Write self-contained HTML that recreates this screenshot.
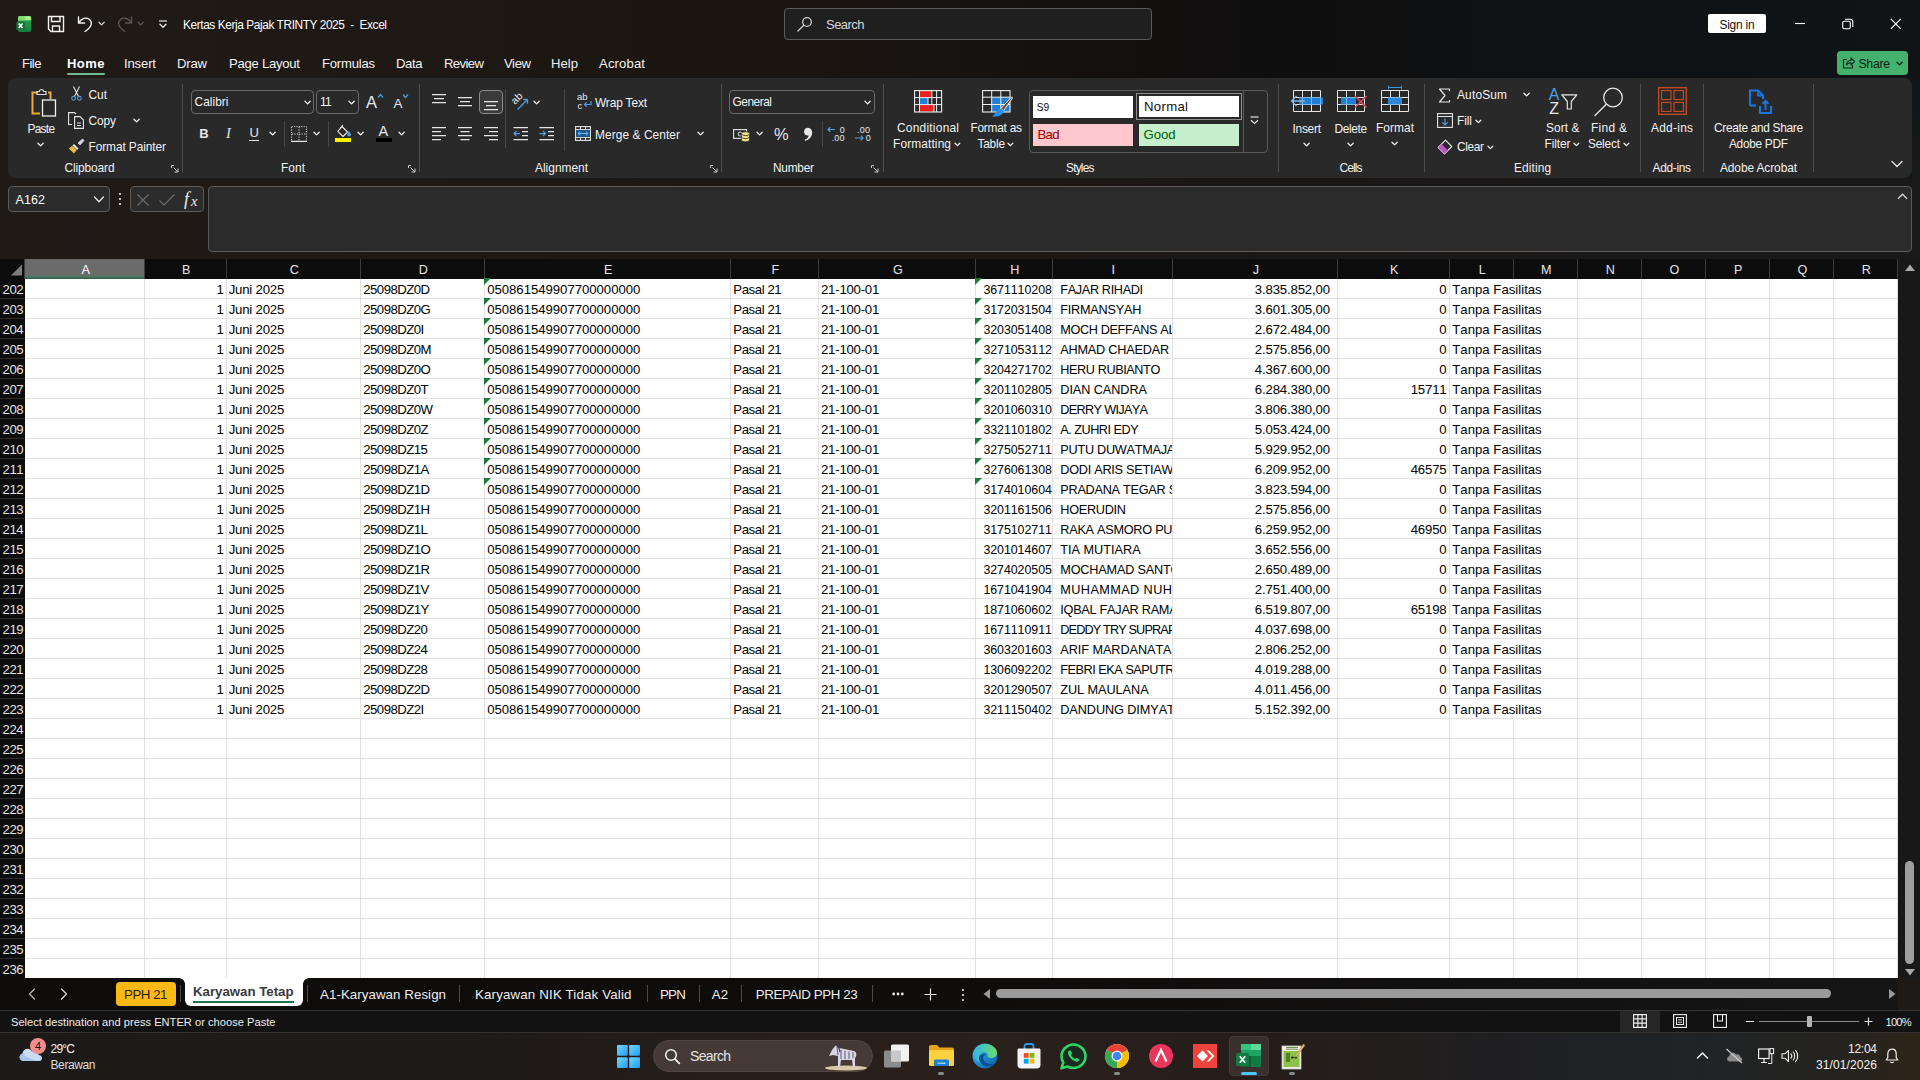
<!DOCTYPE html>
<html lang="id"><head><meta charset="utf-8"><title>Kertas Kerja Pajak TRINTY 2025 - Excel</title>
<style>
html,body{margin:0;padding:0;}
body{width:1920px;height:1080px;overflow:hidden;position:relative;background:#0d0d0d;font-family:"Liberation Sans",sans-serif;}
.a{position:absolute;}
.t{position:absolute;white-space:pre;line-height:1;}
svg{position:absolute;overflow:visible;}
.row{position:absolute;left:0;width:1897px;height:20px;}
.c{position:absolute;top:0;height:19px;overflow:hidden;white-space:pre;font-kerning:none;font-size:13.2px;line-height:22.6px;color:#000;}
.rh{font-kerning:none;position:absolute;left:0;width:23.2px;height:19px;top:0;color:#e2e2e2;font-size:13.2px;line-height:22.6px;text-align:right;white-space:pre;letter-spacing:-0.45px;}
.tri{position:absolute;top:0;width:0;height:0;border-top:7px solid #1e7a3c;border-right:7px solid transparent;}
.vsep{position:absolute;width:1px;background:#4a4a4a;}
.box{position:absolute;border:1px solid #666;border-radius:4px;box-sizing:border-box;}
</style></head><body>

<div class="a" style="left:0;top:0;width:1920px;height:259px;background:linear-gradient(90deg,#201b17 0%,#1d1713 30%,#1b1511 42%,#14110f 55%,#100f0f 66%,#0f1113 80%,#101417 100%);"></div>
<div class="a" id="ribbon" style="left:8px;top:78px;width:1904px;height:100px;border-radius:8px;background:#292929;"></div>
<div class="a" style="left:25px;top:279px;width:1873px;height:699px;background:#fff;"></div>
<div class="a" style="left:0;top:259px;width:1898px;height:20px;background:#0c0c0c;"></div>
<div class="a" style="left:0;top:279px;width:25px;height:699px;background:#0c0c0c;"></div>
<div class="a" style="left:25px;top:259px;width:119px;height:18px;background:#6b6b6b;"></div>
<div class="a" style="left:25px;top:275px;width:119px;height:4px;background:linear-gradient(180deg,#65706b 0%,#4f7563 40%,#2f6148 100%);"></div>
<svg style="left:0;top:259px" width="25" height="20"><path d="M11 16.5 L22 16.5 L22 5.5 Z" fill="#7d7d7d"/></svg>
<div class="a" style="left:144px;top:259px;width:1px;height:20px;background:#3c3c3c;"></div>
<span class="t" style="left:81.60px;top:264.00px;font-size:12.6px;color:#ffffff;">A</span>
<div class="a" style="left:226px;top:259px;width:1px;height:20px;background:#3c3c3c;"></div>
<span class="t" style="left:182.10px;top:264.00px;font-size:12.6px;color:#e6e6e6;">B</span>
<div class="a" style="left:360px;top:259px;width:1px;height:20px;background:#3c3c3c;"></div>
<span class="t" style="left:289.75px;top:264.00px;font-size:12.6px;color:#e6e6e6;">C</span>
<div class="a" style="left:484px;top:259px;width:1px;height:20px;background:#3c3c3c;"></div>
<span class="t" style="left:418.75px;top:264.00px;font-size:12.6px;color:#e6e6e6;">D</span>
<div class="a" style="left:730px;top:259px;width:1px;height:20px;background:#3c3c3c;"></div>
<span class="t" style="left:604.10px;top:264.00px;font-size:12.6px;color:#e6e6e6;">E</span>
<div class="a" style="left:818px;top:259px;width:1px;height:20px;background:#3c3c3c;"></div>
<span class="t" style="left:771.45px;top:264.00px;font-size:12.6px;color:#e6e6e6;">F</span>
<div class="a" style="left:975px;top:259px;width:1px;height:20px;background:#3c3c3c;"></div>
<span class="t" style="left:892.90px;top:264.00px;font-size:12.6px;color:#e6e6e6;">G</span>
<div class="a" style="left:1052px;top:259px;width:1px;height:20px;background:#3c3c3c;"></div>
<span class="t" style="left:1010.25px;top:264.00px;font-size:12.6px;color:#e6e6e6;">H</span>
<div class="a" style="left:1172px;top:259px;width:1px;height:20px;background:#3c3c3c;"></div>
<span class="t" style="left:1111.55px;top:264.00px;font-size:12.6px;color:#e6e6e6;">I</span>
<div class="a" style="left:1337px;top:259px;width:1px;height:20px;background:#3c3c3c;"></div>
<span class="t" style="left:1252.65px;top:264.00px;font-size:12.6px;color:#e6e6e6;">J</span>
<div class="a" style="left:1449px;top:259px;width:1px;height:20px;background:#3c3c3c;"></div>
<span class="t" style="left:1390.10px;top:264.00px;font-size:12.6px;color:#e6e6e6;">K</span>
<div class="a" style="left:1513px;top:259px;width:1px;height:20px;background:#3c3c3c;"></div>
<span class="t" style="left:1478.79px;top:264.00px;font-size:12.6px;color:#e6e6e6;">L</span>
<div class="a" style="left:1577px;top:259px;width:1px;height:20px;background:#3c3c3c;"></div>
<span class="t" style="left:1541.05px;top:264.00px;font-size:12.6px;color:#e6e6e6;">M</span>
<div class="a" style="left:1641px;top:259px;width:1px;height:20px;background:#3c3c3c;"></div>
<span class="t" style="left:1605.75px;top:264.00px;font-size:12.6px;color:#e6e6e6;">N</span>
<div class="a" style="left:1705px;top:259px;width:1px;height:20px;background:#3c3c3c;"></div>
<span class="t" style="left:1669.40px;top:264.00px;font-size:12.6px;color:#e6e6e6;">O</span>
<div class="a" style="left:1769px;top:259px;width:1px;height:20px;background:#3c3c3c;"></div>
<span class="t" style="left:1734.10px;top:264.00px;font-size:12.6px;color:#e6e6e6;">P</span>
<div class="a" style="left:1833px;top:259px;width:1px;height:20px;background:#3c3c3c;"></div>
<span class="t" style="left:1797.40px;top:264.00px;font-size:12.6px;color:#e6e6e6;">Q</span>
<div class="a" style="left:1897px;top:259px;width:1px;height:20px;background:#3c3c3c;"></div>
<span class="t" style="left:1861.75px;top:264.00px;font-size:12.6px;color:#e6e6e6;">R</span>
<div class="a" style="left:24px;top:259px;width:1px;height:20px;background:#3c3c3c;"></div>
<div class="a" style="left:144px;top:279px;width:1px;height:699px;background:#e2e2e2;"></div>
<div class="a" style="left:226px;top:279px;width:1px;height:699px;background:#e2e2e2;"></div>
<div class="a" style="left:360px;top:279px;width:1px;height:699px;background:#e2e2e2;"></div>
<div class="a" style="left:484px;top:279px;width:1px;height:699px;background:#e2e2e2;"></div>
<div class="a" style="left:730px;top:279px;width:1px;height:699px;background:#e2e2e2;"></div>
<div class="a" style="left:818px;top:279px;width:1px;height:699px;background:#e2e2e2;"></div>
<div class="a" style="left:975px;top:279px;width:1px;height:699px;background:#e2e2e2;"></div>
<div class="a" style="left:1052px;top:279px;width:1px;height:699px;background:#e2e2e2;"></div>
<div class="a" style="left:1172px;top:279px;width:1px;height:699px;background:#e2e2e2;"></div>
<div class="a" style="left:1337px;top:279px;width:1px;height:699px;background:#e2e2e2;"></div>
<div class="a" style="left:1449px;top:279px;width:1px;height:699px;background:#e2e2e2;"></div>
<div class="a" style="left:1513px;top:279px;width:1px;height:699px;background:#e2e2e2;"></div>
<div class="a" style="left:1577px;top:279px;width:1px;height:699px;background:#e2e2e2;"></div>
<div class="a" style="left:1641px;top:279px;width:1px;height:699px;background:#e2e2e2;"></div>
<div class="a" style="left:1705px;top:279px;width:1px;height:699px;background:#e2e2e2;"></div>
<div class="a" style="left:1769px;top:279px;width:1px;height:699px;background:#e2e2e2;"></div>
<div class="a" style="left:1833px;top:279px;width:1px;height:699px;background:#e2e2e2;"></div>
<div class="a" style="left:1897px;top:279px;width:1px;height:699px;background:#e2e2e2;"></div>
<div class="a" style="left:25px;top:298px;width:1872px;height:1px;background:#e2e2e2;"></div>
<div class="a" style="left:0;top:298px;width:25px;height:1px;background:#2e2e2e;"></div>
<div class="a" style="left:25px;top:318px;width:1872px;height:1px;background:#e2e2e2;"></div>
<div class="a" style="left:0;top:318px;width:25px;height:1px;background:#2e2e2e;"></div>
<div class="a" style="left:25px;top:338px;width:1872px;height:1px;background:#e2e2e2;"></div>
<div class="a" style="left:0;top:338px;width:25px;height:1px;background:#2e2e2e;"></div>
<div class="a" style="left:25px;top:358px;width:1872px;height:1px;background:#e2e2e2;"></div>
<div class="a" style="left:0;top:358px;width:25px;height:1px;background:#2e2e2e;"></div>
<div class="a" style="left:25px;top:378px;width:1872px;height:1px;background:#e2e2e2;"></div>
<div class="a" style="left:0;top:378px;width:25px;height:1px;background:#2e2e2e;"></div>
<div class="a" style="left:25px;top:398px;width:1872px;height:1px;background:#e2e2e2;"></div>
<div class="a" style="left:0;top:398px;width:25px;height:1px;background:#2e2e2e;"></div>
<div class="a" style="left:25px;top:418px;width:1872px;height:1px;background:#e2e2e2;"></div>
<div class="a" style="left:0;top:418px;width:25px;height:1px;background:#2e2e2e;"></div>
<div class="a" style="left:25px;top:438px;width:1872px;height:1px;background:#e2e2e2;"></div>
<div class="a" style="left:0;top:438px;width:25px;height:1px;background:#2e2e2e;"></div>
<div class="a" style="left:25px;top:458px;width:1872px;height:1px;background:#e2e2e2;"></div>
<div class="a" style="left:0;top:458px;width:25px;height:1px;background:#2e2e2e;"></div>
<div class="a" style="left:25px;top:478px;width:1872px;height:1px;background:#e2e2e2;"></div>
<div class="a" style="left:0;top:478px;width:25px;height:1px;background:#2e2e2e;"></div>
<div class="a" style="left:25px;top:498px;width:1872px;height:1px;background:#e2e2e2;"></div>
<div class="a" style="left:0;top:498px;width:25px;height:1px;background:#2e2e2e;"></div>
<div class="a" style="left:25px;top:518px;width:1872px;height:1px;background:#e2e2e2;"></div>
<div class="a" style="left:0;top:518px;width:25px;height:1px;background:#2e2e2e;"></div>
<div class="a" style="left:25px;top:538px;width:1872px;height:1px;background:#e2e2e2;"></div>
<div class="a" style="left:0;top:538px;width:25px;height:1px;background:#2e2e2e;"></div>
<div class="a" style="left:25px;top:558px;width:1872px;height:1px;background:#e2e2e2;"></div>
<div class="a" style="left:0;top:558px;width:25px;height:1px;background:#2e2e2e;"></div>
<div class="a" style="left:25px;top:578px;width:1872px;height:1px;background:#e2e2e2;"></div>
<div class="a" style="left:0;top:578px;width:25px;height:1px;background:#2e2e2e;"></div>
<div class="a" style="left:25px;top:598px;width:1872px;height:1px;background:#e2e2e2;"></div>
<div class="a" style="left:0;top:598px;width:25px;height:1px;background:#2e2e2e;"></div>
<div class="a" style="left:25px;top:618px;width:1872px;height:1px;background:#e2e2e2;"></div>
<div class="a" style="left:0;top:618px;width:25px;height:1px;background:#2e2e2e;"></div>
<div class="a" style="left:25px;top:638px;width:1872px;height:1px;background:#e2e2e2;"></div>
<div class="a" style="left:0;top:638px;width:25px;height:1px;background:#2e2e2e;"></div>
<div class="a" style="left:25px;top:658px;width:1872px;height:1px;background:#e2e2e2;"></div>
<div class="a" style="left:0;top:658px;width:25px;height:1px;background:#2e2e2e;"></div>
<div class="a" style="left:25px;top:678px;width:1872px;height:1px;background:#e2e2e2;"></div>
<div class="a" style="left:0;top:678px;width:25px;height:1px;background:#2e2e2e;"></div>
<div class="a" style="left:25px;top:698px;width:1872px;height:1px;background:#e2e2e2;"></div>
<div class="a" style="left:0;top:698px;width:25px;height:1px;background:#2e2e2e;"></div>
<div class="a" style="left:25px;top:718px;width:1872px;height:1px;background:#e2e2e2;"></div>
<div class="a" style="left:0;top:718px;width:25px;height:1px;background:#2e2e2e;"></div>
<div class="a" style="left:25px;top:738px;width:1872px;height:1px;background:#e2e2e2;"></div>
<div class="a" style="left:0;top:738px;width:25px;height:1px;background:#2e2e2e;"></div>
<div class="a" style="left:25px;top:758px;width:1872px;height:1px;background:#e2e2e2;"></div>
<div class="a" style="left:0;top:758px;width:25px;height:1px;background:#2e2e2e;"></div>
<div class="a" style="left:25px;top:778px;width:1872px;height:1px;background:#e2e2e2;"></div>
<div class="a" style="left:0;top:778px;width:25px;height:1px;background:#2e2e2e;"></div>
<div class="a" style="left:25px;top:798px;width:1872px;height:1px;background:#e2e2e2;"></div>
<div class="a" style="left:0;top:798px;width:25px;height:1px;background:#2e2e2e;"></div>
<div class="a" style="left:25px;top:818px;width:1872px;height:1px;background:#e2e2e2;"></div>
<div class="a" style="left:0;top:818px;width:25px;height:1px;background:#2e2e2e;"></div>
<div class="a" style="left:25px;top:838px;width:1872px;height:1px;background:#e2e2e2;"></div>
<div class="a" style="left:0;top:838px;width:25px;height:1px;background:#2e2e2e;"></div>
<div class="a" style="left:25px;top:858px;width:1872px;height:1px;background:#e2e2e2;"></div>
<div class="a" style="left:0;top:858px;width:25px;height:1px;background:#2e2e2e;"></div>
<div class="a" style="left:25px;top:878px;width:1872px;height:1px;background:#e2e2e2;"></div>
<div class="a" style="left:0;top:878px;width:25px;height:1px;background:#2e2e2e;"></div>
<div class="a" style="left:25px;top:898px;width:1872px;height:1px;background:#e2e2e2;"></div>
<div class="a" style="left:0;top:898px;width:25px;height:1px;background:#2e2e2e;"></div>
<div class="a" style="left:25px;top:918px;width:1872px;height:1px;background:#e2e2e2;"></div>
<div class="a" style="left:0;top:918px;width:25px;height:1px;background:#2e2e2e;"></div>
<div class="a" style="left:25px;top:938px;width:1872px;height:1px;background:#e2e2e2;"></div>
<div class="a" style="left:0;top:938px;width:25px;height:1px;background:#2e2e2e;"></div>
<div class="a" style="left:25px;top:958px;width:1872px;height:1px;background:#e2e2e2;"></div>
<div class="a" style="left:0;top:958px;width:25px;height:1px;background:#2e2e2e;"></div>
<div class="row" style="top:279px;height:20px;overflow:hidden;"><span class="rh">202</span><span class="c" style="left:144px;width:79.80px;text-align:right;">1</span><span class="c" style="left:228.7px;width:131.3px;letter-spacing:-0.200px;">Juni 2025</span><span class="c" style="left:363.3px;width:120.7px;letter-spacing:-0.551px;">25098DZ0D</span><span class="c" style="left:487.2px;width:242.8px;letter-spacing:-0.042px;">050861549907700000000</span><span class="c" style="left:733.3px;width:84.7px;letter-spacing:-0.418px;">Pasal 21</span><span class="c" style="left:821px;width:154px;letter-spacing:-0.228px;">21-100-01</span><span class="c" style="left:983.4px;width:68.6px;letter-spacing:-0.047px;font-size:12.4px;">3671110208</span><span class="c" style="left:1060.3px;width:111.7px;letter-spacing:-0.356px;font-size:12.7px;">FAJAR RIHADI</span><span class="c" style="left:1172px;width:157.83px;text-align:right;letter-spacing:-0.165px;">3.835.852,00</span><span class="c" style="left:1337px;width:109.53px;text-align:right;letter-spacing:-0.165px;">0</span><span class="c" style="left:1452.3px;width:123.7px;background:#fff;">Tanpa Fasilitas</span></div>
<i class="tri" style="left:484px;top:278px"></i><i class="tri" style="left:975px;top:278px"></i>
<div class="row" style="top:299px;height:20px;overflow:hidden;"><span class="rh">203</span><span class="c" style="left:144px;width:79.80px;text-align:right;">1</span><span class="c" style="left:228.7px;width:131.3px;letter-spacing:-0.200px;">Juni 2025</span><span class="c" style="left:363.3px;width:120.7px;letter-spacing:-0.551px;">25098DZ0G</span><span class="c" style="left:487.2px;width:242.8px;letter-spacing:-0.042px;">050861549907700000000</span><span class="c" style="left:733.3px;width:84.7px;letter-spacing:-0.418px;">Pasal 21</span><span class="c" style="left:821px;width:154px;letter-spacing:-0.228px;">21-100-01</span><span class="c" style="left:983.4px;width:68.6px;letter-spacing:-0.047px;font-size:12.4px;">3172031504</span><span class="c" style="left:1060.3px;width:111.7px;letter-spacing:-0.243px;font-size:12.7px;">FIRMANSYAH</span><span class="c" style="left:1172px;width:157.83px;text-align:right;letter-spacing:-0.165px;">3.601.305,00</span><span class="c" style="left:1337px;width:109.53px;text-align:right;letter-spacing:-0.165px;">0</span><span class="c" style="left:1452.3px;width:123.7px;background:#fff;">Tanpa Fasilitas</span></div>
<i class="tri" style="left:484px;top:298px"></i><i class="tri" style="left:975px;top:298px"></i>
<div class="row" style="top:319px;height:20px;overflow:hidden;"><span class="rh">204</span><span class="c" style="left:144px;width:79.80px;text-align:right;">1</span><span class="c" style="left:228.7px;width:131.3px;letter-spacing:-0.200px;">Juni 2025</span><span class="c" style="left:363.3px;width:120.7px;letter-spacing:-0.551px;">25098DZ0I</span><span class="c" style="left:487.2px;width:242.8px;letter-spacing:-0.042px;">050861549907700000000</span><span class="c" style="left:733.3px;width:84.7px;letter-spacing:-0.418px;">Pasal 21</span><span class="c" style="left:821px;width:154px;letter-spacing:-0.228px;">21-100-01</span><span class="c" style="left:983.4px;width:68.6px;letter-spacing:-0.047px;font-size:12.4px;">3203051408</span><span class="c" style="left:1060.3px;width:111.7px;letter-spacing:-0.385px;font-size:12.7px;">MOCH DEFFANS ALFARIZI</span><span class="c" style="left:1172px;width:157.83px;text-align:right;letter-spacing:-0.165px;">2.672.484,00</span><span class="c" style="left:1337px;width:109.53px;text-align:right;letter-spacing:-0.165px;">0</span><span class="c" style="left:1452.3px;width:123.7px;background:#fff;">Tanpa Fasilitas</span></div>
<i class="tri" style="left:484px;top:318px"></i><i class="tri" style="left:975px;top:318px"></i>
<div class="row" style="top:339px;height:20px;overflow:hidden;"><span class="rh">205</span><span class="c" style="left:144px;width:79.80px;text-align:right;">1</span><span class="c" style="left:228.7px;width:131.3px;letter-spacing:-0.200px;">Juni 2025</span><span class="c" style="left:363.3px;width:120.7px;letter-spacing:-0.551px;">25098DZ0M</span><span class="c" style="left:487.2px;width:242.8px;letter-spacing:-0.042px;">050861549907700000000</span><span class="c" style="left:733.3px;width:84.7px;letter-spacing:-0.418px;">Pasal 21</span><span class="c" style="left:821px;width:154px;letter-spacing:-0.228px;">21-100-01</span><span class="c" style="left:983.4px;width:68.6px;letter-spacing:-0.047px;font-size:12.4px;">3271053112</span><span class="c" style="left:1060.3px;width:111.7px;letter-spacing:-0.216px;font-size:12.7px;">AHMAD CHAEDAR</span><span class="c" style="left:1172px;width:157.83px;text-align:right;letter-spacing:-0.165px;">2.575.856,00</span><span class="c" style="left:1337px;width:109.53px;text-align:right;letter-spacing:-0.165px;">0</span><span class="c" style="left:1452.3px;width:123.7px;background:#fff;">Tanpa Fasilitas</span></div>
<i class="tri" style="left:484px;top:338px"></i><i class="tri" style="left:975px;top:338px"></i>
<div class="row" style="top:359px;height:20px;overflow:hidden;"><span class="rh">206</span><span class="c" style="left:144px;width:79.80px;text-align:right;">1</span><span class="c" style="left:228.7px;width:131.3px;letter-spacing:-0.200px;">Juni 2025</span><span class="c" style="left:363.3px;width:120.7px;letter-spacing:-0.551px;">25098DZ0O</span><span class="c" style="left:487.2px;width:242.8px;letter-spacing:-0.042px;">050861549907700000000</span><span class="c" style="left:733.3px;width:84.7px;letter-spacing:-0.418px;">Pasal 21</span><span class="c" style="left:821px;width:154px;letter-spacing:-0.228px;">21-100-01</span><span class="c" style="left:983.4px;width:68.6px;letter-spacing:-0.047px;font-size:12.4px;">3204271702</span><span class="c" style="left:1060.3px;width:111.7px;letter-spacing:-0.419px;font-size:12.7px;">HERU RUBIANTO</span><span class="c" style="left:1172px;width:157.83px;text-align:right;letter-spacing:-0.165px;">4.367.600,00</span><span class="c" style="left:1337px;width:109.53px;text-align:right;letter-spacing:-0.165px;">0</span><span class="c" style="left:1452.3px;width:123.7px;background:#fff;">Tanpa Fasilitas</span></div>
<i class="tri" style="left:484px;top:358px"></i><i class="tri" style="left:975px;top:358px"></i>
<div class="row" style="top:379px;height:20px;overflow:hidden;"><span class="rh">207</span><span class="c" style="left:144px;width:79.80px;text-align:right;">1</span><span class="c" style="left:228.7px;width:131.3px;letter-spacing:-0.200px;">Juni 2025</span><span class="c" style="left:363.3px;width:120.7px;letter-spacing:-0.551px;">25098DZ0T</span><span class="c" style="left:487.2px;width:242.8px;letter-spacing:-0.042px;">050861549907700000000</span><span class="c" style="left:733.3px;width:84.7px;letter-spacing:-0.418px;">Pasal 21</span><span class="c" style="left:821px;width:154px;letter-spacing:-0.228px;">21-100-01</span><span class="c" style="left:983.4px;width:68.6px;letter-spacing:-0.047px;font-size:12.4px;">3201102805</span><span class="c" style="left:1060.3px;width:111.7px;letter-spacing:-0.072px;font-size:12.7px;">DIAN CANDRA</span><span class="c" style="left:1172px;width:157.83px;text-align:right;letter-spacing:-0.165px;">6.284.380,00</span><span class="c" style="left:1337px;width:109.53px;text-align:right;letter-spacing:-0.165px;">15711</span><span class="c" style="left:1452.3px;width:123.7px;background:#fff;">Tanpa Fasilitas</span></div>
<i class="tri" style="left:484px;top:378px"></i><i class="tri" style="left:975px;top:378px"></i>
<div class="row" style="top:399px;height:20px;overflow:hidden;"><span class="rh">208</span><span class="c" style="left:144px;width:79.80px;text-align:right;">1</span><span class="c" style="left:228.7px;width:131.3px;letter-spacing:-0.200px;">Juni 2025</span><span class="c" style="left:363.3px;width:120.7px;letter-spacing:-0.551px;">25098DZ0W</span><span class="c" style="left:487.2px;width:242.8px;letter-spacing:-0.042px;">050861549907700000000</span><span class="c" style="left:733.3px;width:84.7px;letter-spacing:-0.418px;">Pasal 21</span><span class="c" style="left:821px;width:154px;letter-spacing:-0.228px;">21-100-01</span><span class="c" style="left:983.4px;width:68.6px;letter-spacing:-0.047px;font-size:12.4px;">3201060310</span><span class="c" style="left:1060.3px;width:111.7px;letter-spacing:-0.679px;font-size:12.7px;">DERRY WIJAYA</span><span class="c" style="left:1172px;width:157.83px;text-align:right;letter-spacing:-0.165px;">3.806.380,00</span><span class="c" style="left:1337px;width:109.53px;text-align:right;letter-spacing:-0.165px;">0</span><span class="c" style="left:1452.3px;width:123.7px;background:#fff;">Tanpa Fasilitas</span></div>
<i class="tri" style="left:484px;top:398px"></i><i class="tri" style="left:975px;top:398px"></i>
<div class="row" style="top:419px;height:20px;overflow:hidden;"><span class="rh">209</span><span class="c" style="left:144px;width:79.80px;text-align:right;">1</span><span class="c" style="left:228.7px;width:131.3px;letter-spacing:-0.200px;">Juni 2025</span><span class="c" style="left:363.3px;width:120.7px;letter-spacing:-0.551px;">25098DZ0Z</span><span class="c" style="left:487.2px;width:242.8px;letter-spacing:-0.042px;">050861549907700000000</span><span class="c" style="left:733.3px;width:84.7px;letter-spacing:-0.418px;">Pasal 21</span><span class="c" style="left:821px;width:154px;letter-spacing:-0.228px;">21-100-01</span><span class="c" style="left:983.4px;width:68.6px;letter-spacing:-0.047px;font-size:12.4px;">3321101802</span><span class="c" style="left:1060.3px;width:111.7px;letter-spacing:-0.508px;font-size:12.7px;">A. ZUHRI EDY</span><span class="c" style="left:1172px;width:157.83px;text-align:right;letter-spacing:-0.165px;">5.053.424,00</span><span class="c" style="left:1337px;width:109.53px;text-align:right;letter-spacing:-0.165px;">0</span><span class="c" style="left:1452.3px;width:123.7px;background:#fff;">Tanpa Fasilitas</span></div>
<i class="tri" style="left:484px;top:418px"></i><i class="tri" style="left:975px;top:418px"></i>
<div class="row" style="top:439px;height:20px;overflow:hidden;"><span class="rh">210</span><span class="c" style="left:144px;width:79.80px;text-align:right;">1</span><span class="c" style="left:228.7px;width:131.3px;letter-spacing:-0.200px;">Juni 2025</span><span class="c" style="left:363.3px;width:120.7px;letter-spacing:-0.551px;">25098DZ15</span><span class="c" style="left:487.2px;width:242.8px;letter-spacing:-0.042px;">050861549907700000000</span><span class="c" style="left:733.3px;width:84.7px;letter-spacing:-0.418px;">Pasal 21</span><span class="c" style="left:821px;width:154px;letter-spacing:-0.228px;">21-100-01</span><span class="c" style="left:983.4px;width:68.6px;letter-spacing:-0.047px;font-size:12.4px;">3275052711</span><span class="c" style="left:1060.3px;width:111.7px;letter-spacing:-0.263px;font-size:12.7px;">PUTU DUWATMAJA</span><span class="c" style="left:1172px;width:157.83px;text-align:right;letter-spacing:-0.165px;">5.929.952,00</span><span class="c" style="left:1337px;width:109.53px;text-align:right;letter-spacing:-0.165px;">0</span><span class="c" style="left:1452.3px;width:123.7px;background:#fff;">Tanpa Fasilitas</span></div>
<i class="tri" style="left:484px;top:438px"></i><i class="tri" style="left:975px;top:438px"></i>
<div class="row" style="top:459px;height:20px;overflow:hidden;"><span class="rh">211</span><span class="c" style="left:144px;width:79.80px;text-align:right;">1</span><span class="c" style="left:228.7px;width:131.3px;letter-spacing:-0.200px;">Juni 2025</span><span class="c" style="left:363.3px;width:120.7px;letter-spacing:-0.551px;">25098DZ1A</span><span class="c" style="left:487.2px;width:242.8px;letter-spacing:-0.042px;">050861549907700000000</span><span class="c" style="left:733.3px;width:84.7px;letter-spacing:-0.418px;">Pasal 21</span><span class="c" style="left:821px;width:154px;letter-spacing:-0.228px;">21-100-01</span><span class="c" style="left:983.4px;width:68.6px;letter-spacing:-0.047px;font-size:12.4px;">3276061308</span><span class="c" style="left:1060.3px;width:111.7px;letter-spacing:-0.263px;font-size:12.7px;">DODI ARIS SETIAWAN</span><span class="c" style="left:1172px;width:157.83px;text-align:right;letter-spacing:-0.165px;">6.209.952,00</span><span class="c" style="left:1337px;width:109.53px;text-align:right;letter-spacing:-0.165px;">46575</span><span class="c" style="left:1452.3px;width:123.7px;background:#fff;">Tanpa Fasilitas</span></div>
<i class="tri" style="left:484px;top:458px"></i><i class="tri" style="left:975px;top:458px"></i>
<div class="row" style="top:479px;height:20px;overflow:hidden;"><span class="rh">212</span><span class="c" style="left:144px;width:79.80px;text-align:right;">1</span><span class="c" style="left:228.7px;width:131.3px;letter-spacing:-0.200px;">Juni 2025</span><span class="c" style="left:363.3px;width:120.7px;letter-spacing:-0.551px;">25098DZ1D</span><span class="c" style="left:487.2px;width:242.8px;letter-spacing:-0.042px;">050861549907700000000</span><span class="c" style="left:733.3px;width:84.7px;letter-spacing:-0.418px;">Pasal 21</span><span class="c" style="left:821px;width:154px;letter-spacing:-0.228px;">21-100-01</span><span class="c" style="left:983.4px;width:68.6px;letter-spacing:-0.047px;font-size:12.4px;">3174010604</span><span class="c" style="left:1060.3px;width:111.7px;letter-spacing:-0.263px;font-size:12.7px;">PRADANA TEGAR SAPUTRA</span><span class="c" style="left:1172px;width:157.83px;text-align:right;letter-spacing:-0.165px;">3.823.594,00</span><span class="c" style="left:1337px;width:109.53px;text-align:right;letter-spacing:-0.165px;">0</span><span class="c" style="left:1452.3px;width:123.7px;background:#fff;">Tanpa Fasilitas</span></div>
<i class="tri" style="left:484px;top:478px"></i><i class="tri" style="left:975px;top:478px"></i>
<div class="row" style="top:499px;height:20px;overflow:hidden;"><span class="rh">213</span><span class="c" style="left:144px;width:79.80px;text-align:right;">1</span><span class="c" style="left:228.7px;width:131.3px;letter-spacing:-0.200px;">Juni 2025</span><span class="c" style="left:363.3px;width:120.7px;letter-spacing:-0.551px;">25098DZ1H</span><span class="c" style="left:487.2px;width:242.8px;letter-spacing:-0.042px;">050861549907700000000</span><span class="c" style="left:733.3px;width:84.7px;letter-spacing:-0.418px;">Pasal 21</span><span class="c" style="left:821px;width:154px;letter-spacing:-0.228px;">21-100-01</span><span class="c" style="left:983.4px;width:68.6px;letter-spacing:-0.047px;font-size:12.4px;">3201161506</span><span class="c" style="left:1060.3px;width:111.7px;letter-spacing:-0.282px;font-size:12.7px;">HOERUDIN</span><span class="c" style="left:1172px;width:157.83px;text-align:right;letter-spacing:-0.165px;">2.575.856,00</span><span class="c" style="left:1337px;width:109.53px;text-align:right;letter-spacing:-0.165px;">0</span><span class="c" style="left:1452.3px;width:123.7px;background:#fff;">Tanpa Fasilitas</span></div>
<div class="row" style="top:519px;height:20px;overflow:hidden;"><span class="rh">214</span><span class="c" style="left:144px;width:79.80px;text-align:right;">1</span><span class="c" style="left:228.7px;width:131.3px;letter-spacing:-0.200px;">Juni 2025</span><span class="c" style="left:363.3px;width:120.7px;letter-spacing:-0.551px;">25098DZ1L</span><span class="c" style="left:487.2px;width:242.8px;letter-spacing:-0.042px;">050861549907700000000</span><span class="c" style="left:733.3px;width:84.7px;letter-spacing:-0.418px;">Pasal 21</span><span class="c" style="left:821px;width:154px;letter-spacing:-0.228px;">21-100-01</span><span class="c" style="left:983.4px;width:68.6px;letter-spacing:-0.047px;font-size:12.4px;">3175102711</span><span class="c" style="left:1060.3px;width:111.7px;letter-spacing:-0.263px;font-size:12.7px;">RAKA ASMORO PUTRA</span><span class="c" style="left:1172px;width:157.83px;text-align:right;letter-spacing:-0.165px;">6.259.952,00</span><span class="c" style="left:1337px;width:109.53px;text-align:right;letter-spacing:-0.165px;">46950</span><span class="c" style="left:1452.3px;width:123.7px;background:#fff;">Tanpa Fasilitas</span></div>
<div class="row" style="top:539px;height:20px;overflow:hidden;"><span class="rh">215</span><span class="c" style="left:144px;width:79.80px;text-align:right;">1</span><span class="c" style="left:228.7px;width:131.3px;letter-spacing:-0.200px;">Juni 2025</span><span class="c" style="left:363.3px;width:120.7px;letter-spacing:-0.551px;">25098DZ1O</span><span class="c" style="left:487.2px;width:242.8px;letter-spacing:-0.042px;">050861549907700000000</span><span class="c" style="left:733.3px;width:84.7px;letter-spacing:-0.418px;">Pasal 21</span><span class="c" style="left:821px;width:154px;letter-spacing:-0.228px;">21-100-01</span><span class="c" style="left:983.4px;width:68.6px;letter-spacing:-0.047px;font-size:12.4px;">3201014607</span><span class="c" style="left:1060.3px;width:111.7px;letter-spacing:-0.006px;font-size:12.7px;">TIA MUTIARA</span><span class="c" style="left:1172px;width:157.83px;text-align:right;letter-spacing:-0.165px;">3.652.556,00</span><span class="c" style="left:1337px;width:109.53px;text-align:right;letter-spacing:-0.165px;">0</span><span class="c" style="left:1452.3px;width:123.7px;background:#fff;">Tanpa Fasilitas</span></div>
<div class="row" style="top:559px;height:20px;overflow:hidden;"><span class="rh">216</span><span class="c" style="left:144px;width:79.80px;text-align:right;">1</span><span class="c" style="left:228.7px;width:131.3px;letter-spacing:-0.200px;">Juni 2025</span><span class="c" style="left:363.3px;width:120.7px;letter-spacing:-0.551px;">25098DZ1R</span><span class="c" style="left:487.2px;width:242.8px;letter-spacing:-0.042px;">050861549907700000000</span><span class="c" style="left:733.3px;width:84.7px;letter-spacing:-0.418px;">Pasal 21</span><span class="c" style="left:821px;width:154px;letter-spacing:-0.228px;">21-100-01</span><span class="c" style="left:983.4px;width:68.6px;letter-spacing:-0.047px;font-size:12.4px;">3274020505</span><span class="c" style="left:1060.3px;width:111.7px;letter-spacing:-0.190px;font-size:12.7px;">MOCHAMAD SANTOSO</span><span class="c" style="left:1172px;width:157.83px;text-align:right;letter-spacing:-0.165px;">2.650.489,00</span><span class="c" style="left:1337px;width:109.53px;text-align:right;letter-spacing:-0.165px;">0</span><span class="c" style="left:1452.3px;width:123.7px;background:#fff;">Tanpa Fasilitas</span></div>
<div class="row" style="top:579px;height:20px;overflow:hidden;"><span class="rh">217</span><span class="c" style="left:144px;width:79.80px;text-align:right;">1</span><span class="c" style="left:228.7px;width:131.3px;letter-spacing:-0.200px;">Juni 2025</span><span class="c" style="left:363.3px;width:120.7px;letter-spacing:-0.551px;">25098DZ1V</span><span class="c" style="left:487.2px;width:242.8px;letter-spacing:-0.042px;">050861549907700000000</span><span class="c" style="left:733.3px;width:84.7px;letter-spacing:-0.418px;">Pasal 21</span><span class="c" style="left:821px;width:154px;letter-spacing:-0.228px;">21-100-01</span><span class="c" style="left:983.4px;width:68.6px;letter-spacing:-0.047px;font-size:12.4px;">1671041904</span><span class="c" style="left:1060.3px;width:111.7px;letter-spacing:0.405px;font-size:12.7px;">MUHAMMAD NUH</span><span class="c" style="left:1172px;width:157.83px;text-align:right;letter-spacing:-0.165px;">2.751.400,00</span><span class="c" style="left:1337px;width:109.53px;text-align:right;letter-spacing:-0.165px;">0</span><span class="c" style="left:1452.3px;width:123.7px;background:#fff;">Tanpa Fasilitas</span></div>
<div class="row" style="top:599px;height:20px;overflow:hidden;"><span class="rh">218</span><span class="c" style="left:144px;width:79.80px;text-align:right;">1</span><span class="c" style="left:228.7px;width:131.3px;letter-spacing:-0.200px;">Juni 2025</span><span class="c" style="left:363.3px;width:120.7px;letter-spacing:-0.551px;">25098DZ1Y</span><span class="c" style="left:487.2px;width:242.8px;letter-spacing:-0.042px;">050861549907700000000</span><span class="c" style="left:733.3px;width:84.7px;letter-spacing:-0.418px;">Pasal 21</span><span class="c" style="left:821px;width:154px;letter-spacing:-0.228px;">21-100-01</span><span class="c" style="left:983.4px;width:68.6px;letter-spacing:-0.047px;font-size:12.4px;">1871060602</span><span class="c" style="left:1060.3px;width:111.7px;letter-spacing:-0.263px;font-size:12.7px;">IQBAL FAJAR RAMADHAN</span><span class="c" style="left:1172px;width:157.83px;text-align:right;letter-spacing:-0.165px;">6.519.807,00</span><span class="c" style="left:1337px;width:109.53px;text-align:right;letter-spacing:-0.165px;">65198</span><span class="c" style="left:1452.3px;width:123.7px;background:#fff;">Tanpa Fasilitas</span></div>
<div class="row" style="top:619px;height:20px;overflow:hidden;"><span class="rh">219</span><span class="c" style="left:144px;width:79.80px;text-align:right;">1</span><span class="c" style="left:228.7px;width:131.3px;letter-spacing:-0.200px;">Juni 2025</span><span class="c" style="left:363.3px;width:120.7px;letter-spacing:-0.551px;">25098DZ20</span><span class="c" style="left:487.2px;width:242.8px;letter-spacing:-0.042px;">050861549907700000000</span><span class="c" style="left:733.3px;width:84.7px;letter-spacing:-0.418px;">Pasal 21</span><span class="c" style="left:821px;width:154px;letter-spacing:-0.228px;">21-100-01</span><span class="c" style="left:983.4px;width:68.6px;letter-spacing:-0.047px;font-size:12.4px;">1671110911</span><span class="c" style="left:1060.3px;width:111.7px;letter-spacing:-0.862px;font-size:12.7px;">DEDDY TRY SUPRAPTO</span><span class="c" style="left:1172px;width:157.83px;text-align:right;letter-spacing:-0.165px;">4.037.698,00</span><span class="c" style="left:1337px;width:109.53px;text-align:right;letter-spacing:-0.165px;">0</span><span class="c" style="left:1452.3px;width:123.7px;background:#fff;">Tanpa Fasilitas</span></div>
<div class="row" style="top:639px;height:20px;overflow:hidden;"><span class="rh">220</span><span class="c" style="left:144px;width:79.80px;text-align:right;">1</span><span class="c" style="left:228.7px;width:131.3px;letter-spacing:-0.200px;">Juni 2025</span><span class="c" style="left:363.3px;width:120.7px;letter-spacing:-0.551px;">25098DZ24</span><span class="c" style="left:487.2px;width:242.8px;letter-spacing:-0.042px;">050861549907700000000</span><span class="c" style="left:733.3px;width:84.7px;letter-spacing:-0.418px;">Pasal 21</span><span class="c" style="left:821px;width:154px;letter-spacing:-0.228px;">21-100-01</span><span class="c" style="left:983.4px;width:68.6px;letter-spacing:-0.047px;font-size:12.4px;">3603201603</span><span class="c" style="left:1060.3px;width:111.7px;letter-spacing:-0.061px;font-size:12.7px;">ARIF MARDANATA</span><span class="c" style="left:1172px;width:157.83px;text-align:right;letter-spacing:-0.165px;">2.806.252,00</span><span class="c" style="left:1337px;width:109.53px;text-align:right;letter-spacing:-0.165px;">0</span><span class="c" style="left:1452.3px;width:123.7px;background:#fff;">Tanpa Fasilitas</span></div>
<div class="row" style="top:659px;height:20px;overflow:hidden;"><span class="rh">221</span><span class="c" style="left:144px;width:79.80px;text-align:right;">1</span><span class="c" style="left:228.7px;width:131.3px;letter-spacing:-0.200px;">Juni 2025</span><span class="c" style="left:363.3px;width:120.7px;letter-spacing:-0.551px;">25098DZ28</span><span class="c" style="left:487.2px;width:242.8px;letter-spacing:-0.042px;">050861549907700000000</span><span class="c" style="left:733.3px;width:84.7px;letter-spacing:-0.418px;">Pasal 21</span><span class="c" style="left:821px;width:154px;letter-spacing:-0.228px;">21-100-01</span><span class="c" style="left:983.4px;width:68.6px;letter-spacing:-0.047px;font-size:12.4px;">1306092202</span><span class="c" style="left:1060.3px;width:111.7px;letter-spacing:-0.472px;font-size:12.7px;">FEBRI EKA SAPUTRA</span><span class="c" style="left:1172px;width:157.83px;text-align:right;letter-spacing:-0.165px;">4.019.288,00</span><span class="c" style="left:1337px;width:109.53px;text-align:right;letter-spacing:-0.165px;">0</span><span class="c" style="left:1452.3px;width:123.7px;background:#fff;">Tanpa Fasilitas</span></div>
<div class="row" style="top:679px;height:20px;overflow:hidden;"><span class="rh">222</span><span class="c" style="left:144px;width:79.80px;text-align:right;">1</span><span class="c" style="left:228.7px;width:131.3px;letter-spacing:-0.200px;">Juni 2025</span><span class="c" style="left:363.3px;width:120.7px;letter-spacing:-0.551px;">25098DZ2D</span><span class="c" style="left:487.2px;width:242.8px;letter-spacing:-0.042px;">050861549907700000000</span><span class="c" style="left:733.3px;width:84.7px;letter-spacing:-0.418px;">Pasal 21</span><span class="c" style="left:821px;width:154px;letter-spacing:-0.228px;">21-100-01</span><span class="c" style="left:983.4px;width:68.6px;letter-spacing:-0.047px;font-size:12.4px;">3201290507</span><span class="c" style="left:1060.3px;width:111.7px;letter-spacing:-0.054px;font-size:12.7px;">ZUL MAULANA</span><span class="c" style="left:1172px;width:157.83px;text-align:right;letter-spacing:-0.165px;">4.011.456,00</span><span class="c" style="left:1337px;width:109.53px;text-align:right;letter-spacing:-0.165px;">0</span><span class="c" style="left:1452.3px;width:123.7px;background:#fff;">Tanpa Fasilitas</span></div>
<div class="row" style="top:699px;height:20px;overflow:hidden;"><span class="rh">223</span><span class="c" style="left:144px;width:79.80px;text-align:right;">1</span><span class="c" style="left:228.7px;width:131.3px;letter-spacing:-0.200px;">Juni 2025</span><span class="c" style="left:363.3px;width:120.7px;letter-spacing:-0.551px;">25098DZ2I</span><span class="c" style="left:487.2px;width:242.8px;letter-spacing:-0.042px;">050861549907700000000</span><span class="c" style="left:733.3px;width:84.7px;letter-spacing:-0.418px;">Pasal 21</span><span class="c" style="left:821px;width:154px;letter-spacing:-0.228px;">21-100-01</span><span class="c" style="left:983.4px;width:68.6px;letter-spacing:-0.047px;font-size:12.4px;">3211150402</span><span class="c" style="left:1060.3px;width:111.7px;letter-spacing:-0.085px;font-size:12.7px;">DANDUNG DIMYATI</span><span class="c" style="left:1172px;width:157.83px;text-align:right;letter-spacing:-0.165px;">5.152.392,00</span><span class="c" style="left:1337px;width:109.53px;text-align:right;letter-spacing:-0.165px;">0</span><span class="c" style="left:1452.3px;width:123.7px;background:#fff;">Tanpa Fasilitas</span></div>
<div class="row" style="top:719px;height:20px;overflow:hidden;"><span class="rh">224</span></div>
<div class="row" style="top:739px;height:20px;overflow:hidden;"><span class="rh">225</span></div>
<div class="row" style="top:759px;height:20px;overflow:hidden;"><span class="rh">226</span></div>
<div class="row" style="top:779px;height:20px;overflow:hidden;"><span class="rh">227</span></div>
<div class="row" style="top:799px;height:20px;overflow:hidden;"><span class="rh">228</span></div>
<div class="row" style="top:819px;height:20px;overflow:hidden;"><span class="rh">229</span></div>
<div class="row" style="top:839px;height:20px;overflow:hidden;"><span class="rh">230</span></div>
<div class="row" style="top:859px;height:20px;overflow:hidden;"><span class="rh">231</span></div>
<div class="row" style="top:879px;height:20px;overflow:hidden;"><span class="rh">232</span></div>
<div class="row" style="top:899px;height:20px;overflow:hidden;"><span class="rh">233</span></div>
<div class="row" style="top:919px;height:20px;overflow:hidden;"><span class="rh">234</span></div>
<div class="row" style="top:939px;height:20px;overflow:hidden;"><span class="rh">235</span></div>
<div class="row" style="top:959px;height:19px;overflow:hidden;"><span class="rh">236</span></div>
<svg style="left:16px;top:16px" width="16" height="16" viewBox="0 0 16 16" ><defs><linearGradient id="xg" x1="0" y1="0" x2="0" y2="1"><stop offset="0" stop-color="#3fb558"/><stop offset="1" stop-color="#127a3b"/></linearGradient></defs><rect x="2" y="0" width="13.2" height="16" rx="1.8" fill="url(#xg)"/><path d="M2 1.8 Q2 0 3.8 0 H13.4 Q15.2 0 15.2 1.8 V4.6 H2 Z" fill="#7bdc6f"/><rect x="9" y="0.6" width="5.6" height="3.4" rx="0.8" fill="#b4ee8e"/><rect x="8.6" y="4.6" width="6.6" height="5.6" fill="#1f9347" opacity="0.6"/><rect x="0.3" y="5.4" width="8.6" height="8.6" rx="1.6" fill="#17703a"/><path d="M2.7 7.6 L6.5 11.9 M6.5 7.6 L2.7 11.9" stroke="#fff" stroke-width="1.5"/></svg>
<svg style="left:47px;top:15px" width="18" height="18" viewBox="0 0 18 18" ><path d="M1.5 1.5 H16.5 V16.5 H4 L1.5 14 Z" fill="none" stroke="#f2f2f2" stroke-width="1.4" stroke-linejoin="miter"/><path d="M4.5 1.5 V6.5 H13 V1.5 M5.5 16.5 V11 H12.5 V16.5" fill="none" stroke="#f2f2f2" stroke-width="1.4"/></svg>
<svg style="left:77px;top:15px" width="17" height="18" viewBox="0 0 17 18" ><path d="M1.5 2 V8 H7.5" fill="none" stroke="#f2f2f2" stroke-width="1.4" stroke-linecap="round" stroke-linejoin="round"/><path d="M1.8 7.6 C4 3.5 9 1.8 12.5 4.5 C16 7.5 14.5 12.5 8 16.5" fill="none" stroke="#f2f2f2" stroke-width="1.4" stroke-linecap="round"/></svg>
<svg style="left:97.9px;top:21.4px" width="7.2" height="5.2" viewBox="0 0 7.2 5.2" ><path d="M1 1.3 L3.6 3.9000000000000004 L6.2 1.3" fill="none" stroke="#d0d0d0" stroke-width="1.3" stroke-linecap="round" stroke-linejoin="round"/></svg>
<svg style="left:116px;top:15px" width="17" height="18" viewBox="0 0 17 18" ><path d="M15.5 2 V8 H9.5" fill="none" stroke="#5a5653" stroke-width="1.4" stroke-linecap="round" stroke-linejoin="round"/><path d="M15.2 7.6 C13 3.5 8 1.8 4.5 4.5 C1 7.5 2.5 12.5 9 16.5" fill="none" stroke="#5a5653" stroke-width="1.4" stroke-linecap="round"/></svg>
<svg style="left:136.9px;top:21.4px" width="7.2" height="5.2" viewBox="0 0 7.2 5.2" ><path d="M1 1.3 L3.6 3.9000000000000004 L6.2 1.3" fill="none" stroke="#5a5653" stroke-width="1.3" stroke-linecap="round" stroke-linejoin="round"/></svg>
<svg style="left:158px;top:20px" width="10" height="9" viewBox="0 0 10 9" ><path d="M1 1 H9" stroke="#e6e6e6" stroke-width="1.2"/><path d="M2 4.2 L5 7.2 L8 4.2" fill="none" stroke="#e6e6e6" stroke-width="1.4" stroke-linecap="round" stroke-linejoin="round"/></svg>
<span class="t" style="left:183.00px;top:20.00px;font-size:11.9px;color:#ffffff;letter-spacing:-0.418px;">Kertas Kerja Pajak TRINTY 2025  -  Excel</span>
<div class="a" style="left:784px;top:8px;width:368px;height:32px;box-sizing:border-box;border:1px solid #5c5c5c;border-radius:4px;background:#1f1f1f;"></div>
<svg style="left:797px;top:16px" width="16" height="16" viewBox="0 0 16 16" ><circle cx="10" cy="6" r="4.3" fill="none" stroke="#cfcfcf" stroke-width="1.3"/><path d="M6.8 9.2 L1 15" stroke="#cfcfcf" stroke-width="1.3" stroke-linecap="round"/></svg>
<span class="t" style="left:826.00px;top:18.00px;font-size:13px;color:#d6d6d6;letter-spacing:-0.541px;">Search</span>
<div class="a" style="left:1708px;top:14px;width:58px;height:19px;border-radius:2px;background:#fff;"></div>
<span class="t" style="left:1719.50px;top:20.00px;font-size:11.9px;color:#111;letter-spacing:-0.227px;">Sign in</span>
<svg style="left:1795px;top:18px" width="10" height="10" viewBox="0 0 10 10" ><path d="M0 5.5 H10" stroke="#fff" stroke-width="1.1"/></svg>
<svg style="left:1842px;top:18px" width="12" height="12" viewBox="0 0 12 12" ><rect x="0.7" y="3.2" width="7.6" height="7.6" rx="1.6" fill="none" stroke="#fff" stroke-width="1.1"/><path d="M3 1.2 H8.2 Q10.8 1.2 10.8 3.8 V9" fill="none" stroke="#fff" stroke-width="1.1"/></svg>
<svg style="left:1890px;top:18px" width="12" height="12" viewBox="0 0 12 12" ><path d="M0.8 0.8 L10.8 10.8 M10.8 0.8 L0.8 10.8" stroke="#fff" stroke-width="1.2"/></svg>
<span class="t" style="left:22.00px;top:57.00px;font-size:13.1px;color:#f2f2f2;letter-spacing:-0.536px;">File</span>
<span class="t" style="left:124.00px;top:57.00px;font-size:13.1px;color:#f2f2f2;letter-spacing:-0.150px;">Insert</span>
<span class="t" style="left:177.00px;top:57.00px;font-size:13.1px;color:#f2f2f2;letter-spacing:-0.188px;">Draw</span>
<span class="t" style="left:229.00px;top:57.00px;font-size:13.1px;color:#f2f2f2;letter-spacing:-0.253px;">Page Layout</span>
<span class="t" style="left:322.00px;top:57.00px;font-size:13.1px;color:#f2f2f2;letter-spacing:-0.225px;">Formulas</span>
<span class="t" style="left:396.00px;top:57.00px;font-size:13.1px;color:#f2f2f2;letter-spacing:-0.391px;">Data</span>
<span class="t" style="left:444.00px;top:57.00px;font-size:13.1px;color:#f2f2f2;letter-spacing:-0.588px;">Review</span>
<span class="t" style="left:504.00px;top:57.00px;font-size:13.1px;color:#f2f2f2;letter-spacing:-0.385px;">View</span>
<span class="t" style="left:551.00px;top:57.00px;font-size:13.1px;color:#f2f2f2;letter-spacing:0.021px;">Help</span>
<span class="t" style="left:599.00px;top:57.00px;font-size:13.1px;color:#f2f2f2;letter-spacing:0.146px;">Acrobat</span>
<span class="t" style="left:67.00px;top:57.00px;font-size:13px;color:#ffffff;font-weight:700;letter-spacing:0.458px;">Home</span>
<div class="a" style="left:67px;top:72.5px;width:38px;height:2.5px;border-radius:1.5px;background:#6fbb8f;"></div>
<div class="a" style="left:1837px;top:51px;width:71px;height:24px;border-radius:4px;background:#44b16e;"></div>
<svg style="left:1842px;top:56px" width="13" height="13" viewBox="0 0 13 13" ><path d="M5 3.5 H1.5 V12 H10.5 V9" fill="none" stroke="#0c2a17" stroke-width="1.2"/><path d="M4.5 9 C4.5 6 6.5 4.5 9 4.5 V2 L12.5 5.5 L9 9 V6.8 C7 6.8 5.5 7.5 4.5 9 Z" fill="none" stroke="#0c2a17" stroke-width="1.1" stroke-linejoin="round"/></svg>
<span class="t" style="left:1858.50px;top:58.00px;font-size:12.2px;color:#0c2014;letter-spacing:-0.258px;">Share</span>
<svg style="left:1896.4px;top:60.9px" width="7.2" height="5.2" viewBox="0 0 7.2 5.2" ><path d="M1 1.3 L3.6 3.9000000000000004 L6.2 1.3" fill="none" stroke="#0c2014" stroke-width="1.3" stroke-linecap="round" stroke-linejoin="round"/></svg>
<svg style="left:29px;top:87.5px" width="28" height="32" viewBox="0 0 28 32" ><path d="M9 4.5 H3.5 V25.5 H11" fill="none" stroke="#f0a830" stroke-width="2"/><path d="M19 4.5 H21.5 V11" fill="none" stroke="#f0a830" stroke-width="2"/><path d="M8 6.5 V3.5 H10.5 C10.5 0.8 14.5 0.8 14.5 3.5 H17 V6.5 Z" fill="none" stroke="#dcdcdc" stroke-width="1.2"/><rect x="13.5" y="12" width="13" height="16" fill="#292929" stroke="#f2f2f2" stroke-width="1.3"/></svg>
<span class="t" style="left:27.50px;top:124.00px;font-size:11.9px;color:#f2f2f2;letter-spacing:-0.727px;">Paste</span>
<svg style="left:36.9px;top:142.4px" width="7.2" height="5.2" viewBox="0 0 7.2 5.2" ><path d="M1 1.3 L3.6 3.9000000000000004 L6.2 1.3" fill="none" stroke="#f2f2f2" stroke-width="1.3" stroke-linecap="round" stroke-linejoin="round"/></svg>
<svg style="left:71px;top:86px" width="11" height="15" viewBox="0 0 11 15" ><path d="M2.5 0.5 L7.5 10.5 M8.5 0.5 L3.5 10.5" stroke="#e6e6e6" stroke-width="1.1"/><circle cx="2.6" cy="12.3" r="1.9" fill="none" stroke="#4ea0e0" stroke-width="1.1"/><circle cx="8.4" cy="12.3" r="1.9" fill="none" stroke="#4ea0e0" stroke-width="1.1"/></svg>
<span class="t" style="left:88.50px;top:90.00px;font-size:11.9px;color:#f2f2f2;letter-spacing:-0.008px;">Cut</span>
<svg style="left:68px;top:112px" width="17" height="17" viewBox="0 0 17 17" ><path d="M4 12.5 H0.6 V0.6 H6.5 L8 2" fill="none" stroke="#e6e6e6" stroke-width="1.1"/><path d="M6.6 4.6 H12 L15.4 8 V16.4 H6.6 Z" fill="none" stroke="#e6e6e6" stroke-width="1.1"/><path d="M9 11 H13 M9 13.5 H13" stroke="#e6e6e6" stroke-width="1"/></svg>
<span class="t" style="left:88.50px;top:116.00px;font-size:11.9px;color:#f2f2f2;letter-spacing:-0.089px;">Copy</span>
<svg style="left:132.9px;top:118.4px" width="7.2" height="5.2" viewBox="0 0 7.2 5.2" ><path d="M1 1.3 L3.6 3.9000000000000004 L6.2 1.3" fill="none" stroke="#f2f2f2" stroke-width="1.3" stroke-linecap="round" stroke-linejoin="round"/></svg>
<svg style="left:68px;top:138px" width="17" height="16" viewBox="0 0 17 16" ><path d="M10 5 L14.5 1 L16 2.5 L12 7 Z" fill="#d8d8e8" stroke="#cfcfe0" stroke-width="0.8"/><path d="M6 6 L10.5 10.5 L9 12 L4.5 7.5 Z" fill="#e6e6e6"/><path d="M4.2 7.8 L8.6 12.2 L6 15.5 L0.8 10.5 Z" fill="#e8b84a"/></svg>
<span class="t" style="left:88.50px;top:142.00px;font-size:11.9px;color:#f2f2f2;letter-spacing:-0.088px;">Format Painter</span>
<span class="t" style="left:64.50px;top:163.00px;font-size:11.9px;color:#f2f2f2;letter-spacing:-0.113px;">Clipboard</span>
<svg style="left:171px;top:164.5px" width="8" height="8" viewBox="0 0 8 8" ><path d="M0.5 3 V0.5 H3 M2.5 2.5 L7 7 M7 3.5 V7 H3.5" fill="none" stroke="#c8c8c8" stroke-width="1"/></svg>
<div class="vsep" style="left:182px;top:84px;height:88px;background:#4d4d4d;"></div>
<div class="box" style="left:191px;top:90px;width:123px;height:24px;border-color:#6a6a6a;background:#292929;"></div>
<span class="t" style="left:194.50px;top:97.00px;font-size:11.9px;color:#f2f2f2;letter-spacing:0.049px;">Calibri</span>
<svg style="left:303.9px;top:99.9px" width="7.2" height="5.2" viewBox="0 0 7.2 5.2" ><path d="M1 1.3 L3.6 3.9000000000000004 L6.2 1.3" fill="none" stroke="#f2f2f2" stroke-width="1.3" stroke-linecap="round" stroke-linejoin="round"/></svg>
<div class="box" style="left:316px;top:90px;width:43px;height:24px;border-color:#6a6a6a;background:#292929;"></div>
<span class="t" style="left:320.00px;top:97.00px;font-size:11.9px;color:#f2f2f2;letter-spacing:-0.844px;">11</span>
<svg style="left:348.4px;top:99.9px" width="7.2" height="5.2" viewBox="0 0 7.2 5.2" ><path d="M1 1.3 L3.6 3.9000000000000004 L6.2 1.3" fill="none" stroke="#f2f2f2" stroke-width="1.3" stroke-linecap="round" stroke-linejoin="round"/></svg>
<span class="t" style="left:366.00px;top:94.00px;font-size:16.5px;color:#e6e6e6;">A</span>
<svg style="left:377px;top:93px" width="7" height="6" viewBox="0 0 7 6" ><path d="M1 4.5 L3.5 1.5 L6 4.5" fill="none" stroke="#4ea0e0" stroke-width="1.2"/></svg>
<span class="t" style="left:393.50px;top:97.00px;font-size:13.5px;color:#e6e6e6;">A</span>
<svg style="left:402px;top:93px" width="7" height="6" viewBox="0 0 7 6" ><path d="M1 1.5 L3.5 4.5 L6 1.5" fill="none" stroke="#4ea0e0" stroke-width="1.2"/></svg>
<span class="t" style="left:199.30px;top:127.00px;font-size:13px;color:#e6e6e6;font-weight:700;">B</span>
<span class="t" style="left:226.00px;top:126.42px;font-size:14.5px;color:#e6e6e6;font-style:italic;font-family:'Liberation Serif', serif;">I</span>
<span class="t" style="left:249.50px;top:126.00px;font-size:13px;color:#e6e6e6;">U</span>
<div class="a" style="left:249px;top:139.5px;width:10px;height:1.2px;background:#e6e6e6;"></div>
<svg style="left:269.4px;top:131.4px" width="7.2" height="5.2" viewBox="0 0 7.2 5.2" ><path d="M1 1.3 L3.6 3.9000000000000004 L6.2 1.3" fill="none" stroke="#f2f2f2" stroke-width="1.3" stroke-linecap="round" stroke-linejoin="round"/></svg>
<div class="vsep" style="left:284px;top:121px;height:26px;background:#474747;"></div>
<svg style="left:291px;top:126px" width="16" height="16" viewBox="0 0 16 16" ><rect x="0.6" y="0.6" width="14.8" height="14.8" fill="none" stroke="#cfcfcf" stroke-width="1" stroke-dasharray="1.2 1.2"/><path d="M8 1 V15 M1 8 H15" stroke="#cfcfcf" stroke-width="1" stroke-dasharray="1.2 1.2"/><path d="M0 15.4 H16" stroke="#e6e6e6" stroke-width="1.2"/></svg>
<svg style="left:313.4px;top:131.4px" width="7.2" height="5.2" viewBox="0 0 7.2 5.2" ><path d="M1 1.3 L3.6 3.9000000000000004 L6.2 1.3" fill="none" stroke="#f2f2f2" stroke-width="1.3" stroke-linecap="round" stroke-linejoin="round"/></svg>
<div class="vsep" style="left:328px;top:121px;height:26px;background:#474747;"></div>
<svg style="left:336px;top:124px" width="16" height="14" viewBox="0 0 16 14" ><path d="M6 2.5 L11.5 8 L7 12.5 L1.8 7.3 Z" fill="none" stroke="#e6e6e6" stroke-width="1.1" stroke-linejoin="round"/><path d="M4.3 4.3 L6.8 1" stroke="#e6e6e6" stroke-width="1.1"/><path d="M13 7 C13 7 15 9.6 15 10.8 C15 13 11.2 13 11.2 10.8 C11.2 9.6 13 7 13 7 Z" fill="#4ea0e0"/></svg>
<div class="a" style="left:335px;top:138px;width:16px;height:4px;background:#ffee00;"></div>
<svg style="left:357.4px;top:131.4px" width="7.2" height="5.2" viewBox="0 0 7.2 5.2" ><path d="M1 1.3 L3.6 3.9000000000000004 L6.2 1.3" fill="none" stroke="#f2f2f2" stroke-width="1.3" stroke-linecap="round" stroke-linejoin="round"/></svg>
<span class="t" style="left:378.50px;top:124.00px;font-size:14.5px;color:#e6e6e6;">A</span>
<div class="a" style="left:376px;top:138px;width:16px;height:4px;background:#000;"></div>
<svg style="left:398.4px;top:131.4px" width="7.2" height="5.2" viewBox="0 0 7.2 5.2" ><path d="M1 1.3 L3.6 3.9000000000000004 L6.2 1.3" fill="none" stroke="#f2f2f2" stroke-width="1.3" stroke-linecap="round" stroke-linejoin="round"/></svg>
<span class="t" style="left:281.00px;top:163.00px;font-size:11.9px;color:#f2f2f2;letter-spacing:0.068px;">Font</span>
<svg style="left:408px;top:164.5px" width="8" height="8" viewBox="0 0 8 8" ><path d="M0.5 3 V0.5 H3 M2.5 2.5 L7 7 M7 3.5 V7 H3.5" fill="none" stroke="#c8c8c8" stroke-width="1"/></svg>
<div class="vsep" style="left:418.5px;top:84px;height:88px;background:#4d4d4d;"></div>
<svg style="left:432px;top:94px" width="16" height="16" viewBox="0 0 16 16" ><path d="M0 0.6 H14 M2 4.6 H12 M0 8.6 H14 " stroke="#e6e6e6" stroke-width="1.2"/></svg>
<svg style="left:457.6px;top:97px" width="16" height="16" viewBox="0 0 16 16" ><path d="M0 0.6 H14 M2 4.6 H12 M0 8.6 H14 " stroke="#e6e6e6" stroke-width="1.2"/></svg>
<div class="box" style="left:479px;top:90px;width:24px;height:24px;border-color:#8a8a8a;background:#3a3a3a;border-radius:4px;"></div>
<svg style="left:484px;top:101px" width="16" height="16" viewBox="0 0 16 16" ><path d="M0 0.6 H14 M2 4.6 H12 M0 8.6 H14 " stroke="#e6e6e6" stroke-width="1.2"/></svg>
<div class="vsep" style="left:505px;top:89px;height:59px;background:#474747;"></div>
<svg style="left:512px;top:93px" width="18" height="18" viewBox="0 0 18 18" ><path d="M5.5 16.5 L15.5 6.5 M15.5 6.5 H11.3 M15.5 6.5 V10.7" fill="none" stroke="#4ea0e0" stroke-width="1.3"/></svg>
<span class="t" style="left:514.50px;top:96.00px;font-size:10.5px;color:#e6e6e6;transform:rotate(-45deg);transform-origin:0% 85%;">ab</span>
<svg style="left:532.9px;top:99.9px" width="7.2" height="5.2" viewBox="0 0 7.2 5.2" ><path d="M1 1.3 L3.6 3.9000000000000004 L6.2 1.3" fill="none" stroke="#f2f2f2" stroke-width="1.3" stroke-linecap="round" stroke-linejoin="round"/></svg>
<svg style="left:432px;top:127px" width="16" height="16" viewBox="0 0 16 16" ><path d="M0 0.6 H14 M0 4.6 H9 M0 8.6 H14 M0 12.6 H9 " stroke="#e6e6e6" stroke-width="1.2"/></svg>
<svg style="left:457.6px;top:127px" width="16" height="16" viewBox="0 0 16 16" ><path d="M0 0.6 H14 M2.5 4.6 H11.5 M0 8.6 H14 M2.5 12.6 H11.5 " stroke="#e6e6e6" stroke-width="1.2"/></svg>
<svg style="left:484px;top:127px" width="16" height="16" viewBox="0 0 16 16" ><path d="M0 0.6 H14 M5 4.6 H14 M0 8.6 H14 M5 12.6 H14 " stroke="#e6e6e6" stroke-width="1.2"/></svg>
<svg style="left:512.5px;top:127px" width="17" height="14" viewBox="0 0 17 14" ><path d="M0.5 0.6 H15 M9 4.6 H15 M9 8.6 H15 M0.5 12.6 H15" stroke="#e6e6e6" stroke-width="1.2"/><path d="M7 6.6 H1 M3.5 4 L1 6.6 L3.5 9.2" fill="none" stroke="#4ea0e0" stroke-width="1.2"/></svg>
<svg style="left:538.5px;top:127px" width="17" height="14" viewBox="0 0 17 14" ><path d="M0.5 0.6 H15 M9 4.6 H15 M9 8.6 H15 M0.5 12.6 H15" stroke="#e6e6e6" stroke-width="1.2"/><path d="M0.5 6.6 H6.5 M4 4 L6.5 6.6 L4 9.2" fill="none" stroke="#4ea0e0" stroke-width="1.2"/></svg>
<div class="vsep" style="left:564px;top:89px;height:62px;background:#474747;"></div>
<span class="t" style="left:577.00px;top:92.00px;font-size:9.5px;color:#e6e6e6;">ab</span>
<span class="t" style="left:577.50px;top:101.00px;font-size:9.5px;color:#e6e6e6;">c</span>
<svg style="left:583px;top:101px" width="9" height="8" viewBox="0 0 9 8" ><path d="M8 0 V3.5 H1.5 M3.8 1.2 L1.5 3.5 L3.8 5.8" fill="none" stroke="#4ea0e0" stroke-width="1.2"/></svg>
<span class="t" style="left:595.00px;top:98.00px;font-size:11.9px;color:#f2f2f2;letter-spacing:-0.137px;">Wrap Text</span>
<svg style="left:575px;top:126px" width="16" height="15" viewBox="0 0 16 15" ><rect x="0.6" y="0.6" width="14.8" height="13.8" fill="none" stroke="#e6e6e6" stroke-width="1.1"/><path d="M0.6 3.6 H15.4 M0.6 11.4 H15.4 M5.5 0.6 V3.6 M10.5 0.6 V3.6 M5.5 11.4 V14.4 M10.5 11.4 V14.4" stroke="#e6e6e6" stroke-width="1"/><rect x="1.2" y="4.2" width="13.6" height="6.6" fill="#1d5b96"/><path d="M3 7.5 H13 M5 5.7 L3 7.5 L5 9.3 M11 5.7 L13 7.5 L11 9.3" fill="none" stroke="#6fb7f0" stroke-width="1"/></svg>
<span class="t" style="left:595.00px;top:130.00px;font-size:11.9px;color:#f2f2f2;letter-spacing:0.082px;">Merge &amp; Center</span>
<svg style="left:696.9px;top:131.4px" width="7.2" height="5.2" viewBox="0 0 7.2 5.2" ><path d="M1 1.3 L3.6 3.9000000000000004 L6.2 1.3" fill="none" stroke="#f2f2f2" stroke-width="1.3" stroke-linecap="round" stroke-linejoin="round"/></svg>
<span class="t" style="left:535.00px;top:163.00px;font-size:11.9px;color:#f2f2f2;letter-spacing:0.014px;">Alignment</span>
<svg style="left:710px;top:164.5px" width="8" height="8" viewBox="0 0 8 8" ><path d="M0.5 3 V0.5 H3 M2.5 2.5 L7 7 M7 3.5 V7 H3.5" fill="none" stroke="#c8c8c8" stroke-width="1"/></svg>
<div class="vsep" style="left:720.5px;top:84px;height:88px;background:#4d4d4d;"></div>
<div class="box" style="left:729px;top:90px;width:146px;height:24px;border-color:#6a6a6a;background:#292929;"></div>
<span class="t" style="left:732.50px;top:97.00px;font-size:11.9px;color:#f2f2f2;letter-spacing:-0.469px;">General</span>
<svg style="left:864.4px;top:99.9px" width="7.2" height="5.2" viewBox="0 0 7.2 5.2" ><path d="M1 1.3 L3.6 3.9000000000000004 L6.2 1.3" fill="none" stroke="#f2f2f2" stroke-width="1.3" stroke-linecap="round" stroke-linejoin="round"/></svg>
<svg style="left:733px;top:128px" width="18" height="15" viewBox="0 0 18 15" ><rect x="0.6" y="1.6" width="13" height="8.8" fill="none" stroke="#e6e6e6" stroke-width="1.1"/><circle cx="7" cy="6" r="2" fill="none" stroke="#e6e6e6" stroke-width="1"/><path d="M8.4 5.5 C8.4 3.2 16.6 3.2 16.6 5.5 V12 C16.6 14.4 8.4 14.4 8.4 12 Z" fill="#efe28a" stroke="#292929" stroke-width="0.8"/><path d="M9 6.6 C10.5 8 14.5 8 16 6.6 M9 9.6 C10.5 11 14.5 11 16 9.6" fill="none" stroke="#3a3320" stroke-width="0.9"/></svg>
<svg style="left:755.9px;top:131.4px" width="7.2" height="5.2" viewBox="0 0 7.2 5.2" ><path d="M1 1.3 L3.6 3.9000000000000004 L6.2 1.3" fill="none" stroke="#f2f2f2" stroke-width="1.3" stroke-linecap="round" stroke-linejoin="round"/></svg>
<span class="t" style="left:774.00px;top:126.00px;font-size:16.5px;color:#e6e6e6;">%</span>
<svg style="left:803px;top:127px" width="10" height="15" viewBox="0 0 10 15" ><path d="M5 0.8 C7.8 0.8 9.2 3 9.2 5.6 C9.2 9.5 6.5 12.8 2.2 14 L1.6 12.8 C4.3 11.6 5.6 9.9 5.6 8.4 C3 8.8 1 7.2 1 4.8 C1 2.4 2.8 0.8 5 0.8 Z" fill="#e6e6e6"/></svg>
<div class="vsep" style="left:822px;top:121px;height:26px;background:#474747;"></div>
<svg style="left:826.5px;top:125.5px" width="18" height="16" viewBox="0 0 18 16" ><path d="M8 3.5 H1 M3.3 1.2 L1 3.5 L3.3 5.8" fill="none" stroke="#4ea0e0" stroke-width="1.2"/></svg>
<span class="t" style="left:839.70px;top:126.00px;font-size:9px;color:#e6e6e6;">0</span>
<span class="t" style="left:831.80px;top:134.00px;font-size:9px;color:#e6e6e6;letter-spacing:0.042px;">.00</span>
<svg style="left:853.5px;top:125.5px" width="18" height="16" viewBox="0 0 18 16" ><path d="M1 12 H9 M6.7 9.7 L9 12 L6.7 14.3" fill="none" stroke="#4ea0e0" stroke-width="1.2"/></svg>
<span class="t" style="left:857.00px;top:126.00px;font-size:9px;color:#e6e6e6;letter-spacing:0.242px;">.00</span>
<span class="t" style="left:865.70px;top:134.00px;font-size:9px;color:#e6e6e6;">0</span>
<span class="t" style="left:773.00px;top:163.00px;font-size:11.9px;color:#f2f2f2;letter-spacing:-0.259px;">Number</span>
<svg style="left:871px;top:164.5px" width="8" height="8" viewBox="0 0 8 8" ><path d="M0.5 3 V0.5 H3 M2.5 2.5 L7 7 M7 3.5 V7 H3.5" fill="none" stroke="#c8c8c8" stroke-width="1"/></svg>
<div class="vsep" style="left:882.5px;top:84px;height:88px;background:#4d4d4d;"></div>
<svg style="left:914px;top:89.5px" width="29" height="23" viewBox="0 0 29 23" ><rect x="0.6" y="0.6" width="27" height="21.4" fill="#292929"/><rect x="5.5" y="1" width="12" height="6.4" fill="#e8211d"/><rect x="5.5" y="7.8" width="8.5" height="6.6" fill="#1f7fd6"/><rect x="5.5" y="14.8" width="14.5" height="6.8" fill="#e8211d"/><path d="M5.5 0.6 V22 M17.8 0.6 V14.6 M22.6 0.6 V22 M0.6 7.6 H27.6 M0.6 14.6 H27.6 M14 7.6 V14.6 M20 14.6 V22" stroke="#f0f0f0" stroke-width="1"/><rect x="0.6" y="0.6" width="27" height="21.4" fill="none" stroke="#f0f0f0" stroke-width="1.1"/></svg>
<span class="t" style="left:897.00px;top:123.00px;font-size:11.9px;color:#f2f2f2;letter-spacing:0.250px;">Conditional</span>
<span class="t" style="left:893.00px;top:139.00px;font-size:11.9px;color:#f2f2f2;letter-spacing:0.128px;">Formatting</span>
<svg style="left:953.6px;top:141.6px" width="6.8" height="4.8" viewBox="0 0 6.8 4.8" ><path d="M1 1.2 L3.4 3.5999999999999996 L5.8 1.2" fill="none" stroke="#f2f2f2" stroke-width="1.3" stroke-linecap="round" stroke-linejoin="round"/></svg>
<svg style="left:982px;top:89.5px" width="31" height="28" viewBox="0 0 31 28" ><rect x="9.7" y="7.2" width="18.3" height="14.6" fill="#1f7fd6"/><path d="M0.6 7.2 H28 M0.6 14.5 H28 M9.7 0.6 V22 M18.8 0.6 V22" stroke="#f0f0f0" stroke-width="1"/><rect x="0.6" y="0.6" width="27.4" height="21.4" fill="none" stroke="#f0f0f0" stroke-width="1.1"/><path d="M29.6 6.8 L30.6 8 L21.6 20.6 L18.8 18.6 Z" fill="#6b4a33" stroke="#f0f0f0" stroke-width="1"/><path d="M18.6 18.4 L21.8 20.8 C21.5 24.5 17 27.3 9.5 26.6 C13.5 25 13.5 20 18.6 18.4 Z" fill="#2b8fe6"/></svg>
<span class="t" style="left:970.50px;top:123.00px;font-size:11.9px;color:#f2f2f2;letter-spacing:-0.254px;">Format as</span>
<span class="t" style="left:977.50px;top:139.00px;font-size:11.9px;color:#f2f2f2;letter-spacing:-0.234px;">Table</span>
<svg style="left:1007.1px;top:141.6px" width="6.8" height="4.8" viewBox="0 0 6.8 4.8" ><path d="M1 1.2 L3.4 3.5999999999999996 L5.8 1.2" fill="none" stroke="#f2f2f2" stroke-width="1.3" stroke-linecap="round" stroke-linejoin="round"/></svg>
<div class="box" style="left:1029px;top:90px;width:239px;height:63px;border-color:#5a5a5a;background:#292929;border-radius:4px;"></div>
<div class="a" style="left:1243px;top:91px;width:1px;height:61px;background:#5a5a5a;"></div>
<div class="a" style="left:1033px;top:96px;width:100px;height:22px;background:#fff;"></div>
<span class="t" style="left:1036.80px;top:103.00px;font-size:10.2px;color:#111;">S9</span>
<div class="a" style="left:1136px;top:93px;width:106px;height:27px;box-sizing:border-box;border:1px solid #8c8c8c;background:#292929;"></div>
<div class="a" style="left:1139px;top:96px;width:100px;height:21px;background:#fff;"></div>
<span class="t" style="left:1144.00px;top:100.00px;font-size:13.2px;color:#111;letter-spacing:0.300px;">Normal</span>
<div class="a" style="left:1033px;top:124px;width:100px;height:22px;background:#ffc7ce;"></div>
<span class="t" style="left:1037.50px;top:128.00px;font-size:13.2px;color:#9c0006;letter-spacing:-0.734px;">Bad</span>
<div class="a" style="left:1139px;top:124px;width:100px;height:22px;background:#c6efce;"></div>
<span class="t" style="left:1143.50px;top:128.00px;font-size:13.2px;color:#006100;letter-spacing:-0.089px;">Good</span>
<svg style="left:1250px;top:116px" width="9" height="9" viewBox="0 0 9 9" ><path d="M0.5 1 H8.5" stroke="#e6e6e6" stroke-width="1.2"/><path d="M1 4.2 L4.5 7.5 L8 4.2" fill="none" stroke="#e6e6e6" stroke-width="1.2"/></svg>
<span class="t" style="left:1066.00px;top:163.00px;font-size:11.9px;color:#f2f2f2;letter-spacing:-0.778px;">Styles</span>
<div class="vsep" style="left:1277.5px;top:84px;height:88px;background:#4d4d4d;"></div>
<svg style="left:1290px;top:88.5px" width="34" height="25" viewBox="0 0 34 25" ><path d="M3.5 1.5 H30.5 V22.5 H3.5 Z M3.5 8.5 H30.5 M3.5 15.5 H30.5 M12.5 1.5 V22.5 M21.5 1.5 V22.5" fill="none" stroke="#e6e6e6" stroke-width="1"/><rect x="9" y="8.5" width="24" height="7" fill="#1f7fd6"/><path d="M12.5 8.5 V15.5 M21.5 8.5 V15.5 M30.5 8.5 V15.5" stroke="#7fc0ff" stroke-width="0.9"/><path d="M15 12 H1.5 M6.5 7 L1.5 12 L6.5 17" fill="none" stroke="#7fb4e0" stroke-width="1.4"/></svg>
<span class="t" style="left:1292.50px;top:124.00px;font-size:11.9px;color:#f2f2f2;letter-spacing:-0.250px;">Insert</span>
<svg style="left:1302.9px;top:142.4px" width="7.2" height="5.2" viewBox="0 0 7.2 5.2" ><path d="M1 1.3 L3.6 3.9000000000000004 L6.2 1.3" fill="none" stroke="#f2f2f2" stroke-width="1.3" stroke-linecap="round" stroke-linejoin="round"/></svg>
<svg style="left:1337px;top:88.5px" width="31" height="25" viewBox="0 0 31 25" ><path d="M0.5 1.5 H27.5 V22.5 H0.5 Z M0.5 8.5 H27.5 M0.5 15.5 H27.5 M9.5 1.5 V22.5 M18.5 1.5 V22.5" fill="none" stroke="#e6e6e6" stroke-width="1"/><rect x="4" y="8.5" width="15" height="7" fill="#1f7fd6"/><path d="M9.5 8.5 V15.5" stroke="#7fc0ff" stroke-width="0.9"/><path d="M18 7 L29.5 18.5 M29.5 7 L18 18.5" stroke="#d9475e" stroke-width="1.7"/></svg>
<span class="t" style="left:1334.50px;top:124.00px;font-size:11.9px;color:#f2f2f2;letter-spacing:-0.375px;">Delete</span>
<svg style="left:1346.9px;top:142.4px" width="7.2" height="5.2" viewBox="0 0 7.2 5.2" ><path d="M1 1.3 L3.6 3.9000000000000004 L6.2 1.3" fill="none" stroke="#f2f2f2" stroke-width="1.3" stroke-linecap="round" stroke-linejoin="round"/></svg>
<svg style="left:1381px;top:85px" width="29" height="28" viewBox="0 0 29 28" ><path d="M0.5 5.5 H27.5 V26.5 H0.5 Z M0.5 12.5 H27.5 M0.5 19.5 H27.5 M9.5 5.5 V26.5 M18.5 5.5 V26.5" fill="none" stroke="#e6e6e6" stroke-width="1"/><rect x="7" y="12.5" width="14" height="7" fill="#2b88d8"/><path d="M7.5 2.5 H20.5 M7.5 0.5 V4.5 M20.5 0.5 V4.5" stroke="#3a96dd" stroke-width="1"/></svg>
<span class="t" style="left:1376.00px;top:123.00px;font-size:11.9px;color:#f2f2f2;letter-spacing:0.066px;">Format</span>
<svg style="left:1390.9px;top:141.4px" width="7.2" height="5.2" viewBox="0 0 7.2 5.2" ><path d="M1 1.3 L3.6 3.9000000000000004 L6.2 1.3" fill="none" stroke="#f2f2f2" stroke-width="1.3" stroke-linecap="round" stroke-linejoin="round"/></svg>
<span class="t" style="left:1339.50px;top:163.00px;font-size:11.9px;color:#f2f2f2;letter-spacing:-0.859px;">Cells</span>
<div class="vsep" style="left:1424px;top:84px;height:88px;background:#4d4d4d;"></div>
<svg style="left:1438px;top:88px" width="13" height="15" viewBox="0 0 13 15" ><path d="M11.5 3 V1 H1.5 L7 7.5 L1.5 14 H11.5 V12" fill="none" stroke="#e6e6e6" stroke-width="1.2" stroke-linejoin="round"/></svg>
<span class="t" style="left:1457.00px;top:90.00px;font-size:11.9px;color:#f2f2f2;letter-spacing:0.180px;">AutoSum</span>
<svg style="left:1523.4px;top:92.4px" width="7.2" height="5.2" viewBox="0 0 7.2 5.2" ><path d="M1 1.3 L3.6 3.9000000000000004 L6.2 1.3" fill="none" stroke="#f2f2f2" stroke-width="1.3" stroke-linecap="round" stroke-linejoin="round"/></svg>
<svg style="left:1437px;top:113px" width="16" height="15" viewBox="0 0 16 15" ><rect x="0.6" y="0.6" width="14.8" height="13.8" fill="none" stroke="#e6e6e6" stroke-width="1.1"/><path d="M0.6 3.5 H15.4" stroke="#e6e6e6" stroke-width="1"/><path d="M8 5.5 V12 M5.2 9.4 L8 12 L10.8 9.4" fill="none" stroke="#4ea0e0" stroke-width="1.2"/></svg>
<span class="t" style="left:1457.00px;top:116.00px;font-size:11.9px;color:#f2f2f2;letter-spacing:-0.068px;">Fill</span>
<svg style="left:1475.1px;top:118.6px" width="6.8" height="4.8" viewBox="0 0 6.8 4.8" ><path d="M1 1.2 L3.4 3.5999999999999996 L5.8 1.2" fill="none" stroke="#f2f2f2" stroke-width="1.3" stroke-linecap="round" stroke-linejoin="round"/></svg>
<svg style="left:1436px;top:139px" width="17" height="16" viewBox="0 0 17 16" ><path d="M9.5 1.2 L15.8 7.5 L8.5 14.8 L2.2 8.5 Z" fill="none" stroke="#e6e6e6" stroke-width="1.1" stroke-linejoin="round"/><path d="M5.6 5.1 L11.9 11.4 L8.5 14.8 L2.2 8.5 Z" fill="#c050c8"/></svg>
<span class="t" style="left:1457.00px;top:142.00px;font-size:11.9px;color:#f2f2f2;letter-spacing:-0.355px;">Clear</span>
<svg style="left:1487.1px;top:144.6px" width="6.8" height="4.8" viewBox="0 0 6.8 4.8" ><path d="M1 1.2 L3.4 3.5999999999999996 L5.8 1.2" fill="none" stroke="#f2f2f2" stroke-width="1.3" stroke-linecap="round" stroke-linejoin="round"/></svg>
<span class="t" style="left:1548.70px;top:87.00px;font-size:16px;color:#4ea0e0;">A</span>
<span class="t" style="left:1549.20px;top:101.00px;font-size:16px;color:#e6e6e6;">Z</span>
<svg style="left:1561px;top:94px" width="18" height="18" viewBox="0 0 18 18" ><path d="M0.8 0.8 H15.8 L10.3 7.5 V15 H6.3 V7.5 Z" fill="none" stroke="#e6e6e6" stroke-width="1.2" stroke-linejoin="round"/></svg>
<span class="t" style="left:1546.00px;top:123.00px;font-size:11.9px;color:#f2f2f2;letter-spacing:0.091px;">Sort &amp;</span>
<span class="t" style="left:1544.50px;top:139.00px;font-size:11.9px;color:#f2f2f2;letter-spacing:-0.087px;">Filter</span>
<svg style="left:1573.1px;top:141.6px" width="6.8" height="4.8" viewBox="0 0 6.8 4.8" ><path d="M1 1.2 L3.4 3.5999999999999996 L5.8 1.2" fill="none" stroke="#f2f2f2" stroke-width="1.3" stroke-linecap="round" stroke-linejoin="round"/></svg>
<svg style="left:1594px;top:87px" width="30" height="30" viewBox="0 0 30 30" ><circle cx="19" cy="10.5" r="9.3" fill="none" stroke="#e6e6e6" stroke-width="1.3"/><path d="M12.3 17.2 L1 28.5" stroke="#e6e6e6" stroke-width="1.3" stroke-linecap="round"/></svg>
<span class="t" style="left:1591.00px;top:123.00px;font-size:11.9px;color:#f2f2f2;letter-spacing:0.325px;">Find &amp;</span>
<span class="t" style="left:1588.00px;top:139.00px;font-size:11.9px;color:#f2f2f2;letter-spacing:-0.212px;">Select</span>
<svg style="left:1623.1px;top:141.6px" width="6.8" height="4.8" viewBox="0 0 6.8 4.8" ><path d="M1 1.2 L3.4 3.5999999999999996 L5.8 1.2" fill="none" stroke="#f2f2f2" stroke-width="1.3" stroke-linecap="round" stroke-linejoin="round"/></svg>
<span class="t" style="left:1514.00px;top:163.00px;font-size:11.9px;color:#f2f2f2;letter-spacing:0.107px;">Editing</span>
<div class="vsep" style="left:1640px;top:84px;height:88px;background:#4d4d4d;"></div>
<svg style="left:1658px;top:87px" width="29" height="28" viewBox="0 0 29 28" ><rect x="0.7" y="0.7" width="27.6" height="26.6" fill="none" stroke="#cc4a22" stroke-width="1.3"/><rect x="3.6" y="3.6" width="9.4" height="9" fill="none" stroke="#cc4a22" stroke-width="1.1"/><rect x="16" y="3.6" width="9.4" height="9" fill="none" stroke="#cc4a22" stroke-width="1.1"/><rect x="3.6" y="15.4" width="9.4" height="9" fill="none" stroke="#cc4a22" stroke-width="1.1"/><rect x="16" y="15.4" width="9.4" height="9" fill="none" stroke="#cc4a22" stroke-width="1.1"/></svg>
<span class="t" style="left:1651.00px;top:123.00px;font-size:11.9px;color:#f2f2f2;letter-spacing:0.279px;">Add-ins</span>
<span class="t" style="left:1652.50px;top:163.00px;font-size:11.9px;color:#f2f2f2;letter-spacing:-0.305px;">Add-ins</span>
<div class="vsep" style="left:1703px;top:84px;height:88px;background:#4d4d4d;"></div>
<svg style="left:1748px;top:89px" width="25" height="26" viewBox="0 0 25 26" ><path d="M2 16.5 V1.5 H10 L15 6.5 V10" fill="none" stroke="#1a73e0" stroke-width="2.2" stroke-linejoin="round"/><path d="M10 1.5 V6.5 H15" fill="none" stroke="#1a73e0" stroke-width="1.8"/><path d="M2 16.5 H8" stroke="#1a73e0" stroke-width="2.2"/><path d="M12 17 V24 H23 V17" fill="none" stroke="#1a73e0" stroke-width="2.2"/><path d="M17.5 21 V12 M14.5 14.8 L17.5 11.8 L20.5 14.8" fill="none" stroke="#1a73e0" stroke-width="2"/></svg>
<span class="t" style="left:1714.00px;top:123.00px;font-size:11.9px;color:#f2f2f2;letter-spacing:-0.325px;">Create and Share</span>
<span class="t" style="left:1729.00px;top:139.00px;font-size:11.9px;color:#f2f2f2;letter-spacing:-0.309px;">Adobe PDF</span>
<span class="t" style="left:1720.00px;top:163.00px;font-size:11.9px;color:#f2f2f2;letter-spacing:-0.085px;">Adobe Acrobat</span>
<div class="vsep" style="left:1813px;top:84px;height:88px;background:#4d4d4d;"></div>
<svg style="left:1891px;top:160px" width="12" height="8" viewBox="0 0 12 8" ><path d="M1 1.5 L6 6.5 L11 1.5" fill="none" stroke="#e6e6e6" stroke-width="1.3" stroke-linecap="round" stroke-linejoin="round"/></svg>
<div class="a" style="left:0;top:178px;width:1920px;height:81px;background:linear-gradient(90deg,#1f1a16 0%,#1d1815 35%,#1a1817 65%,#191919 100%);"></div>
<div class="a" style="left:0;top:78px;width:8px;height:100px;background:#1f1a16;"></div>
<div class="a" style="left:1912px;top:70px;width:8px;height:108px;background:linear-gradient(180deg,#101417,#191a1a);"></div>
<div class="box" style="left:8px;top:186px;width:102px;height:26px;background:#2b2b2b;border-color:#5e5a57;"></div>
<span class="t" style="left:15.50px;top:194.00px;font-size:12.5px;color:#ffffff;letter-spacing:0.099px;">A162</span>
<svg style="left:93px;top:195px" width="12" height="9" viewBox="0 0 12 9" ><path d="M1.5 2 L6 6.8 L10.5 2" fill="none" stroke="#e6e6e6" stroke-width="1.3" stroke-linecap="round" stroke-linejoin="round"/></svg>
<svg style="left:118px;top:189px" width="4" height="18" viewBox="0 0 4 18" ><circle cx="2" cy="5" r="1.1" fill="#e6e6e6"/><circle cx="2" cy="10" r="1.1" fill="#e6e6e6"/><circle cx="2" cy="15" r="1.1" fill="#e6e6e6"/></svg>
<div class="box" style="left:130px;top:186px;width:74px;height:26px;background:#2b2b2b;border-color:#5e5a57;"></div>
<svg style="left:136px;top:193px" width="14" height="14" viewBox="0 0 14 14" ><path d="M1.5 1.5 L12.5 12.5 M12.5 1.5 L1.5 12.5" stroke="#6e6e6e" stroke-width="1.1"/></svg>
<svg style="left:158px;top:193px" width="18" height="14" viewBox="0 0 18 14" ><path d="M1.5 7.5 L6 12 L16.5 1.5" fill="none" stroke="#6e6e6e" stroke-width="1.1"/></svg>
<span class="t" style="left:184.00px;top:190.41px;font-size:18px;color:#ededed;font-style:italic;font-family:'Liberation Serif', serif;">f</span>
<span class="t" style="left:191.00px;top:194.42px;font-size:14.5px;color:#ededed;font-style:italic;font-family:'Liberation Serif', serif;">x</span>
<div class="box" style="left:208px;top:186px;width:1704px;height:66px;background:#2b2b2b;border-color:#5e5a57;"></div>
<svg style="left:1897px;top:193px" width="11" height="7" viewBox="0 0 11 7" ><path d="M1 5.8 L5.5 1.2 L10 5.8" fill="none" stroke="#d8d8d8" stroke-width="1.3"/></svg>
<div class="a" style="left:1898px;top:259px;width:22px;height:719px;background:#181818;"></div>
<svg style="left:1904.5px;top:264px" width="10" height="7" viewBox="0 0 10 7" ><path d="M0 7 L5 0.5 L10 7 Z" fill="#a8a8a8"/></svg>
<svg style="left:1904.5px;top:969px" width="10" height="7" viewBox="0 0 10 7" ><path d="M0 0 L5 6.5 L10 0 Z" fill="#a8a8a8"/></svg>
<div class="a" style="left:1905px;top:861px;width:9px;height:103px;border-radius:4.5px;background:#9e9e9e;"></div>
<div class="a" style="left:0;top:978px;width:1920px;height:32px;background:linear-gradient(90deg,#0e0b0b 0%,#0f0d0c 50%,#151515 100%);"></div>
<div class="a" style="left:1898px;top:978px;width:22px;height:32px;background:#1d1a17;"></div>
<svg style="left:28px;top:988px" width="8" height="12" viewBox="0 0 8 12" ><path d="M6.5 1 L1.5 6 L6.5 11" fill="none" stroke="#b4b4b4" stroke-width="1.3" stroke-linecap="round" stroke-linejoin="round"/></svg>
<svg style="left:60px;top:988px" width="8" height="12" viewBox="0 0 8 12" ><path d="M1.5 1 L6.5 6 L1.5 11" fill="none" stroke="#d6d6d6" stroke-width="1.3" stroke-linecap="round" stroke-linejoin="round"/></svg>
<div class="a" style="left:116px;top:982px;width:60px;height:24px;border-radius:4px;background:#fdb913;"></div>
<span class="t" style="left:124.00px;top:988.00px;font-size:13.3px;color:#2d2204;letter-spacing:-0.466px;">PPH 21</span>
<div class="vsep" style="left:180px;top:985px;height:17px;background:#4a4a4a;"></div>
<div class="a" style="left:185px;top:978px;width:118px;height:28px;border-radius:0 0 6px 6px;background:#fff;"></div>
<span class="t" style="left:193.00px;top:985.00px;font-size:13.3px;color:#3b3b3b;font-weight:700;letter-spacing:-0.038px;">Karyawan Tetap</span>
<div class="a" style="left:193px;top:1001px;width:101px;height:2px;background:#1e7145;"></div>
<div class="vsep" style="left:307px;top:985px;height:17px;background:#4a4a4a;"></div>
<div class="a" style="left:179px;top:978px;width:6px;height:6px;background:radial-gradient(circle at 0 100%,rgba(255,255,255,0) 5.5px,#fff 6.2px);"></div>
<div class="a" style="left:303px;top:978px;width:6px;height:6px;background:radial-gradient(circle at 100% 100%,rgba(255,255,255,0) 5.5px,#fff 6.2px);"></div>
<span class="t" style="left:320.00px;top:988.00px;font-size:13.3px;color:#ededed;letter-spacing:0.064px;">A1-Karyawan Resign</span>
<div class="vsep" style="left:459px;top:985px;height:17px;background:#4a4a4a;"></div>
<span class="t" style="left:475.00px;top:988.00px;font-size:13.3px;color:#ededed;letter-spacing:0.163px;">Karyawan NIK Tidak Valid</span>
<div class="vsep" style="left:647px;top:985px;height:17px;background:#4a4a4a;"></div>
<span class="t" style="left:660.00px;top:988.00px;font-size:13.3px;color:#ededed;letter-spacing:-0.772px;">PPN</span>
<div class="vsep" style="left:699px;top:985px;height:17px;background:#4a4a4a;"></div>
<span class="t" style="left:711.80px;top:988.00px;font-size:13.3px;color:#ededed;letter-spacing:0.134px;">A2</span>
<div class="vsep" style="left:741px;top:985px;height:17px;background:#4a4a4a;"></div>
<span class="t" style="left:755.80px;top:988.00px;font-size:13.3px;color:#ededed;letter-spacing:-0.394px;">PREPAID PPH 23</span>
<div class="vsep" style="left:872px;top:985px;height:17px;background:#4a4a4a;"></div>
<svg style="left:892px;top:992px" width="12" height="4" viewBox="0 0 12 4" ><circle cx="1.7" cy="2" r="1.4" fill="#e6e6e6"/><circle cx="6" cy="2" r="1.4" fill="#e6e6e6"/><circle cx="10.3" cy="2" r="1.4" fill="#e6e6e6"/></svg>
<svg style="left:924px;top:988px" width="13" height="13" viewBox="0 0 13 13" ><path d="M6.5 0.5 V12.5 M0.5 6.5 H12.5" stroke="#e6e6e6" stroke-width="1.2"/></svg>
<svg style="left:961px;top:988px" width="4" height="14" viewBox="0 0 4 14" ><circle cx="2" cy="2" r="1.1" fill="#e6e6e6"/><circle cx="2" cy="7" r="1.1" fill="#e6e6e6"/><circle cx="2" cy="12" r="1.1" fill="#e6e6e6"/></svg>
<svg style="left:983px;top:989px" width="7" height="10" viewBox="0 0 7 10" ><path d="M7 0 L0.5 5 L7 10 Z" fill="#9a9a9a"/></svg>
<svg style="left:1889px;top:989px" width="7" height="10" viewBox="0 0 7 10" ><path d="M0 0 L6.5 5 L0 10 Z" fill="#9a9a9a"/></svg>
<div class="a" style="left:996px;top:989px;width:835px;height:9px;border-radius:4.5px;background:#9a9a9a;"></div>
<div class="a" style="left:0;top:1010px;width:1920px;height:22px;background:#121212;border-top:1px solid #363636;box-sizing:border-box;"></div>
<span class="t" style="left:11.00px;top:1017.00px;font-size:11.1px;color:#ededed;letter-spacing:0.024px;">Select destination and press ENTER or choose Paste</span>
<div class="a" style="left:1620px;top:1011px;width:40px;height:21px;background:#262626;"></div>
<svg style="left:1633px;top:1014px" width="14" height="14" viewBox="0 0 14 14" ><path d="M0.6 0.6 H13.4 V13.4 H0.6 Z M0.6 4.9 H13.4 M0.6 9.1 H13.4 M4.9 0.6 V13.4 M9.1 0.6 V13.4" fill="none" stroke="#f0f0f0" stroke-width="1.1"/></svg>
<svg style="left:1673px;top:1014px" width="14" height="14" viewBox="0 0 14 14" ><rect x="0.6" y="0.6" width="12.8" height="12.8" fill="none" stroke="#f0f0f0" stroke-width="1.1"/><rect x="3.5" y="3.5" width="7" height="7" fill="none" stroke="#f0f0f0" stroke-width="1"/><path d="M5 5.8 H9 M5 8.2 H9" stroke="#f0f0f0" stroke-width="0.9"/></svg>
<svg style="left:1713px;top:1014px" width="14" height="14" viewBox="0 0 14 14" ><rect x="0.6" y="0.6" width="12.8" height="12.8" fill="none" stroke="#f0f0f0" stroke-width="1.1"/><path d="M4.5 0.6 V7 H9.5 V0.6" fill="none" stroke="#f0f0f0" stroke-width="1.1"/></svg>
<div class="a" style="left:1746px;top:1021px;width:8px;height:1.2px;background:#e6e6e6;"></div>
<div class="a" style="left:1759px;top:1021px;width:100px;height:1px;background:#8a8a8a;"></div>
<div class="a" style="left:1807px;top:1016px;width:5px;height:11px;border-radius:1px;background:#b4b4b4;"></div>
<svg style="left:1864px;top:1017px" width="9" height="9" viewBox="0 0 9 9" ><path d="M4.5 0.5 V8.5 M0.5 4.5 H8.5" stroke="#e6e6e6" stroke-width="1.2"/></svg>
<span class="t" style="left:1885.50px;top:1017.00px;font-size:11.1px;color:#ededed;letter-spacing:-0.792px;">100%</span>
<div class="a" style="left:0;top:1032px;width:1920px;height:48px;background:linear-gradient(90deg,#1c1a19 0%,#1e1a18 25%,#261e1a 38%,#2a201c 52%,#261d1a 66%,#1f1f21 78%,#202327 88%,#24231f 95%,#2c2418 100%);border-top:1px solid #35312e;box-sizing:border-box;"></div>
<svg style="left:18px;top:1044px" width="26" height="18" viewBox="0 0 26 18" ><path d="M6 17 C1 17 0 11 4.5 9.5 C5 4 12 3 14 7.5 C17 5.5 21 8 20.5 11 C25 11 25.5 17 21 17 Z" fill="#c9dcf2"/><path d="M6 17 C1 17 0 11 4.5 9.5 C7 13 14 15 21 17 Z" fill="#a9c4e6"/></svg>
<div class="a" style="left:30px;top:1038px;width:16px;height:16px;border-radius:8px;background:#f58d8d;"></div>
<span class="t" style="left:34.94px;top:1041.00px;font-size:11px;color:#2a1010;">4</span>
<span class="t" style="left:50.50px;top:1043.00px;font-size:12px;color:#f0f0f0;letter-spacing:-0.771px;">29°C</span>
<span class="t" style="left:50.50px;top:1059.00px;font-size:12px;color:#dcdcdc;letter-spacing:-0.396px;">Berawan</span>
<svg style="left:617px;top:1045px" width="23" height="23" viewBox="0 0 23 23" ><defs><linearGradient id="wg" x1="0" y1="0" x2="1" y2="1"><stop offset="0" stop-color="#74d7ff"/><stop offset="1" stop-color="#1e9cf0"/></linearGradient></defs><rect x="0" y="0" width="10.8" height="10.8" rx="1" fill="url(#wg)"/><rect x="12.2" y="0" width="10.8" height="10.8" rx="1" fill="url(#wg)"/><rect x="0" y="12.2" width="10.8" height="10.8" rx="1" fill="url(#wg)"/><rect x="12.2" y="12.2" width="10.8" height="10.8" rx="1" fill="url(#wg)"/></svg>
<div class="a" style="left:653px;top:1039.5px;width:220px;height:32.5px;border-radius:16.5px;background:#453a35;border:1px solid #52463f;box-sizing:border-box;"></div>
<svg style="left:664px;top:1048px" width="17" height="17" viewBox="0 0 17 17" ><circle cx="7" cy="7" r="5.3" fill="none" stroke="#ececec" stroke-width="1.6"/><path d="M11 11 L15.3 15.3" stroke="#ececec" stroke-width="1.8" stroke-linecap="round"/></svg>
<span class="t" style="left:690.00px;top:1049.00px;font-size:14px;color:#e2e2e2;letter-spacing:-0.672px;">Search</span>
<svg style="left:824px;top:1042px" width="44" height="30" viewBox="0 0 44 30" ><ellipse cx="22" cy="26" rx="21" ry="2.6" fill="#d9c9a8"/><path d="M8 8 L12 3 L15 6 L30 9 C33 10 33 14 31 16 L31 25 L29 25 L28 18 L17 18 L16 25 L14 25 L14 14 L9 13 L5 14 Z" fill="#d9d5e3"/><path d="M13 5 L14 13 M17 8 L17 17 M21 9 L21 17 M25 9.5 L25 17 M29 10 L29 16" stroke="#6d6488" stroke-width="1.1"/><path d="M12 3 L15 6 L16 10" stroke="#4a3c68" stroke-width="1.2" fill="none"/></svg>
<svg style="left:884px;top:1044px" width="26" height="24" viewBox="0 0 26 24" ><rect x="0" y="6.5" width="17" height="17" rx="1.5" fill="#8b8b8b"/><rect x="7" y="0.5" width="18" height="17" rx="1.5" fill="#f2f2f2"/><rect x="7" y="6.5" width="10" height="11" fill="#c8c8c8"/></svg>
<svg style="left:929px;top:1044px" width="25" height="24" viewBox="0 0 25 24" ><path d="M0 3 C0 1.8 0.8 1 2 1 H8 L10.5 3.5 H23 C24.2 3.5 25 4.3 25 5.5 V20 H0 Z" fill="#e8a317"/><rect x="0" y="6" width="25" height="16" rx="1.5" fill="#ffd23e"/><path d="M5 22 V17 C5 16 5.8 15.5 6.5 15.5 H18.5 C19.2 15.5 20 16 20 17 V22 Z" fill="#1c7fd6"/><rect x="8.5" y="18.5" width="8" height="1.5" fill="#9fd0ff"/></svg>
<div class="a" style="left:938px;top:1072px;width:6px;height:3px;border-radius:1.5px;background:#8a8a8a;"></div>
<svg style="left:972px;top:1043px" width="26" height="26" viewBox="0 0 26 26" ><defs><linearGradient id="eg" x1="0" y1="0" x2="1" y2="1"><stop offset="0" stop-color="#35c1f1"/><stop offset="1" stop-color="#0c59a4"/></linearGradient><linearGradient id="eg2" x1="0" y1="0" x2="1" y2="0"><stop offset="0" stop-color="#2fb5e8"/><stop offset="1" stop-color="#6ddc6a"/></linearGradient></defs><circle cx="13" cy="13" r="12.5" fill="url(#eg)"/><path d="M1.5 9 C4 1 16 -2 23 5 C26 8.5 25.5 13 22 14.5 C18 16 15 14.5 15.5 12 C16 10 13 8 10 9.5 C6 11.5 6.5 17 9 20 C3 18 0 13 1.5 9 Z" fill="url(#eg2)"/><path d="M9 20 C12 24.5 19 24.5 23 20.5 C19 22 13 21 11.5 16.5 C10.8 14 12 12 14 11.5 C10 10 6.5 13 7 16 C7.2 17.5 8 19 9 20 Z" fill="#0b4f94"/></svg>
<svg style="left:1017px;top:1043px" width="24" height="26" viewBox="0 0 24 26" ><path d="M7.5 6 V3.5 C7.5 2 8.5 1 10 1 H14 C15.5 1 16.5 2 16.5 3.5 V6" fill="none" stroke="#2b9be8" stroke-width="1.8"/><path d="M0.5 7 C0.5 6 1 5.5 2 5.5 H22 C23 5.5 23.5 6 23.5 7 V22 C23.5 24 22 25.5 20 25.5 H4 C2 25.5 0.5 24 0.5 22 Z" fill="#f4f4f6"/><rect x="6.8" y="10" width="4.8" height="4.8" fill="#f25022"/><rect x="12.6" y="10" width="4.8" height="4.8" fill="#7fba00"/><rect x="6.8" y="15.8" width="4.8" height="4.8" fill="#00a4ef"/><rect x="12.6" y="15.8" width="4.8" height="4.8" fill="#ffb900"/></svg>
<svg style="left:1060px;top:1043px" width="27" height="27" viewBox="0 0 27 27" ><path d="M13.5 1.5 C20 1.5 25.5 6.8 25.5 13.3 C25.5 19.8 20 25 13.5 25 C11.3 25 9.3 24.5 7.5 23.5 L1.5 25.3 L3.3 19.5 C2.2 17.7 1.5 15.6 1.5 13.3 C1.5 6.8 7 1.5 13.5 1.5 Z" fill="#1a2a1f" stroke="#2fd366" stroke-width="2.6" stroke-linejoin="round"/><path d="M9.5 7.5 C8.5 7.8 7.8 9 8 10.3 C8.5 14 12.5 18 16.5 18.8 C17.8 19 19 18.3 19.3 17.3 L19.3 16.2 L16.5 14.8 L15.3 16 C13.5 15.3 11.7 13.5 11 11.7 L12.2 10.5 L10.8 7.5 Z" fill="#2fd366"/></svg>
<svg style="left:1105px;top:1044px" width="24" height="24" viewBox="0 0 24 24" ><circle cx="12" cy="12" r="12" fill="#fff"/><path d="M12 12 L1.6 6 A12 12 0 0 1 22.4 6 Z" fill="#ea4335"/><path d="M12 12 L22.4 6 A12 12 0 0 1 12 24 Z" fill="#fbbc05"/><path d="M12 12 L12 24 A12 12 0 0 1 1.6 6 Z" fill="#34a853"/><circle cx="12" cy="12" r="5.5" fill="#fff"/><circle cx="12" cy="12" r="4.3" fill="#4285f4"/></svg>
<div class="a" style="left:1114px;top:1072px;width:6px;height:3px;border-radius:1.5px;background:#8a8a8a;"></div>
<svg style="left:1149px;top:1044px" width="24" height="24" viewBox="0 0 24 24" ><circle cx="12" cy="12" r="12" fill="#e8365d"/><path d="M6.5 17.5 L12 6 L17.5 17.5" fill="none" stroke="#fff" stroke-width="2.2" stroke-linejoin="miter"/></svg>
<svg style="left:1193px;top:1044px" width="24" height="24" viewBox="0 0 24 24" ><rect x="0" y="0" width="24" height="24" fill="#ef443b"/><path d="M9.5 6.5 L15 12 L9.5 17.5 L4 12 Z" fill="#fff"/><path d="M13.5 6.5 L16 6.5 L21.5 12 L16 17.5 L13.5 17.5 L19 12 Z" fill="#fff"/></svg>
<div class="a" style="left:1229px;top:1036px;width:40px;height:40px;border-radius:4px;background:#38302c;border:1px solid #433a36;box-sizing:border-box;"></div>
<svg style="left:1236px;top:1044px" width="26" height="24" viewBox="0 0 26 24" ><rect x="5" y="0" width="20" height="23" rx="2" fill="#21a366"/><rect x="5" y="0" width="10" height="6" fill="#33c481"/><rect x="15" y="0" width="10" height="6" fill="#5fd99a"/><rect x="15" y="6" width="10" height="6" fill="#21a366"/><rect x="5" y="12" width="10" height="11" fill="#185c37"/><rect x="15" y="12" width="10" height="11" fill="#107c41"/><rect x="0" y="9" width="13" height="13" rx="1.5" fill="#107c41"/><path d="M3.8 12.2 L9.2 18.8 M9.2 12.2 L3.8 18.8" stroke="#fff" stroke-width="1.7"/></svg>
<div class="a" style="left:1241px;top:1072px;width:16px;height:3px;border-radius:1.5px;background:#4cc2ff;"></div>
<svg style="left:1281px;top:1043px" width="24" height="27" viewBox="0 0 24 27" ><rect x="1" y="3" width="19" height="23" fill="#f0f0e8" stroke="#c8c8c0" stroke-width="0.8"/><rect x="2.5" y="8" width="16" height="16" fill="#8bc34a"/><path d="M5 4.5 H17 M5 6.2 H17" stroke="#4a7a2a" stroke-width="0.8"/><path d="M6 10 V19 M8 10 V19 M10.5 14.5 H15.5 M11.5 13 L10.5 14.5 L11.5 16 M14.5 13 L15.5 14.5 L14.5 16" stroke="#1f3f10" stroke-width="1" fill="none"/><path d="M22.5 1 L14.5 12 L13.8 14.5 L16 13 L24 2.2 Z" fill="#e8c070" stroke="#a88030" stroke-width="0.5"/></svg>
<div class="a" style="left:1289px;top:1072px;width:6px;height:3px;border-radius:1.5px;background:#8a8a8a;"></div>
<svg style="left:1696px;top:1051px" width="13" height="9" viewBox="0 0 13 9" ><path d="M1.5 7 L6.5 2 L11.5 7" fill="none" stroke="#f0f0f0" stroke-width="1.5" stroke-linecap="round" stroke-linejoin="round"/></svg>
<svg style="left:1725px;top:1048px" width="19" height="16" viewBox="0 0 19 16" ><path d="M5 13.5 C1.5 13.5 1 9 4.2 8.2 C4.5 4.5 9.5 3.5 11 6.5 C13.5 5.5 15.8 7.3 15.3 9.3 C18 9.3 18 13.5 15 13.5 Z" fill="#8a8a8a"/><path d="M1.5 1 L17 15" stroke="#c8c8c8" stroke-width="1.3"/></svg>
<svg style="left:1758px;top:1048px" width="17" height="17" viewBox="0 0 17 17" ><rect x="0.6" y="1" width="10.5" height="9.5" fill="none" stroke="#f0f0f0" stroke-width="1.2"/><path d="M3 14.5 H9 M6 10.5 V14.5" stroke="#f0f0f0" stroke-width="1.2"/><rect x="12" y="0.6" width="3.6" height="5" fill="none" stroke="#f0f0f0" stroke-width="1"/><path d="M13.8 5.6 V15.5 H10" fill="none" stroke="#f0f0f0" stroke-width="1"/></svg>
<svg style="left:1781px;top:1049px" width="18" height="14" viewBox="0 0 18 14" ><path d="M1 4.8 H4 L7.5 1.5 V12.5 L4 9.2 H1 Z" fill="none" stroke="#f0f0f0" stroke-width="1.1" stroke-linejoin="round"/><path d="M10 4.8 C11 6 11 8 10 9.2 M12.3 3 C14.2 5.2 14.2 8.8 12.3 11 M14.6 1.3 C17.4 4.5 17.4 9.5 14.6 12.7" fill="none" stroke="#f0f0f0" stroke-width="1.1" stroke-linecap="round"/></svg>
<span class="t" style="left:1848.00px;top:1043.00px;font-size:12px;color:#f2f2f2;letter-spacing:-0.258px;">12:04</span>
<span class="t" style="left:1816.00px;top:1059.00px;font-size:12px;color:#f2f2f2;letter-spacing:0.104px;">31/01/2026</span>
<svg style="left:1885px;top:1048px" width="14" height="16" viewBox="0 0 14 16" ><path d="M7 1.2 C4 1.2 2.8 3.5 2.8 6 V9.5 L1.2 12 H12.8 L11.2 9.5 V6 C11.2 3.5 10 1.2 7 1.2 Z" fill="none" stroke="#f0f0f0" stroke-width="1.2" stroke-linejoin="round"/><path d="M5.3 13.6 C5.6 15 8.4 15 8.7 13.6" fill="none" stroke="#f0f0f0" stroke-width="1.1"/></svg>
</body></html>
